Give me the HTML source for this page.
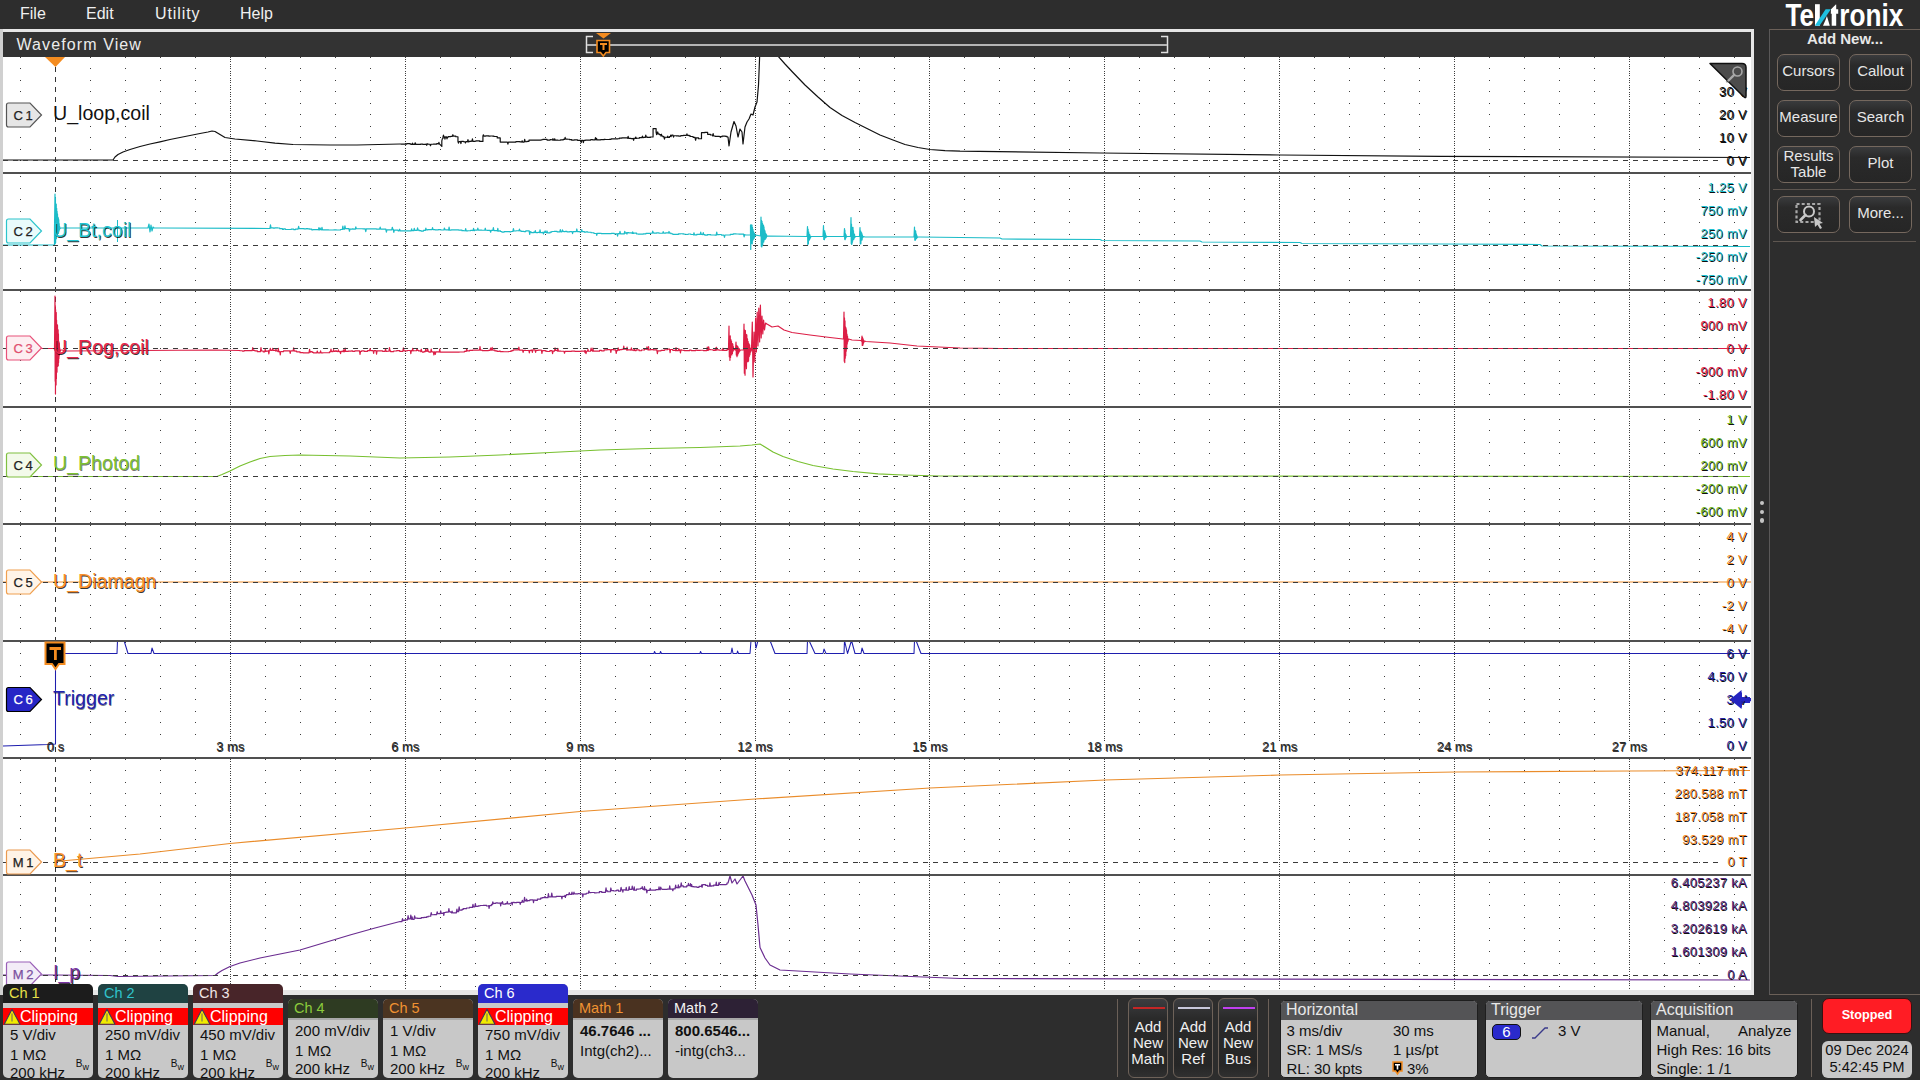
<!DOCTYPE html>
<html><head><meta charset="utf-8">
<style>
*{margin:0;padding:0;box-sizing:border-box}
html,body{width:1920px;height:1080px;overflow:hidden;background:#2d2d2d;font-family:"Liberation Sans",sans-serif}
.abs{position:absolute}
#menu{left:0;top:0;width:1920px;height:29px;background:#2d2d2d}
#menu span{position:absolute;top:5px;font-size:16px;color:#f0f0f0}
#frame{left:0;top:29px;width:1754px;height:966px;background:#e6e6e6}
#title{left:3px;top:32px;width:1748px;height:25px;background:#333}
#title .t{position:absolute;left:13.5px;top:4px;font-size:16px;color:#ececec;letter-spacing:1.1px}
svg.plot{position:absolute;left:0;top:0}
.badge{position:absolute;width:37px;height:25px}
.lbl{position:absolute;font-size:19.6px;line-height:22px;white-space:nowrap}
.ax{position:absolute;right:173px;font-size:13px;line-height:14px;white-space:nowrap;text-align:right;letter-spacing:0.3px;text-shadow:0.8px 0.9px 0.4px rgba(0,0,0,.95)}
.tx{position:absolute;font-size:13px;line-height:14px;white-space:nowrap;color:#2a2a2a;text-shadow:0.6px 0.7px 0.4px rgba(0,0,0,.8)}
/* sidebar */
#side{left:1769px;top:29px;width:151px;height:966px;border-left:1px solid #5a5858;border-top:1px solid #6b6058;border-bottom:1px solid #6b6058}
.sbtn{position:absolute;width:63px;height:37px;border:1px solid #75685e;border-radius:7px;background:linear-gradient(#3a3b3d,#2a2a2a 30%,#262626);color:#e6e6e6;font-size:15px;text-align:center;line-height:33px}
/* bottom */
.chb{position:absolute;width:90px;border-radius:5px;overflow:hidden;background:#c8c8c8;font-size:15px;color:#111}
.chb .h{height:19px;padding-left:6px;line-height:19px;font-size:14.5px}
.chb .l{position:absolute;left:7px;white-space:nowrap}
.panel{position:absolute;top:1000px;height:78px;background:#c8c8c8;border-radius:5px;overflow:hidden;border:1px solid #1e1e1e;font-size:15px;color:#111}
.panel .h{height:19px;background:#545456;color:#e8e8e8;padding-left:5px;line-height:18px;font-size:16px}
.panel .l{position:absolute;white-space:nowrap}
.anb{position:absolute;top:998px;width:40px;height:80px;border:1px solid #6e6259;border-radius:6px;background:linear-gradient(#3c3d40,#2a2a2a 25%,#262626 85%,#303030);color:#f0f0f0;font-size:15px;text-align:center;line-height:16px}
.anb i{position:absolute;left:4px;top:8px;width:32px;height:2px}
.anb div{position:absolute;left:0;width:100%;top:20px}
</style></head><body>
<div id="menu" class="abs">
<span style="left:20px">File</span><span style="left:86px">Edit</span><span style="left:155px;letter-spacing:0.9px">Utility</span><span style="left:240px">Help</span>
</div>
<svg class="abs" style="left:1780px;top:0" width="130" height="30" viewBox="1780 0 130 30"><text x="1785.5" y="25.8" font-family="Liberation Sans" font-weight="bold" font-size="31" fill="#fff" textLength="28.5" lengthAdjust="spacingAndGlyphs">Te</text><rect x="1815" y="4.2" width="4.8" height="21.6" fill="#fff"/><path d="M1823 25.8 L1825.6 19.8 L1826.9 16 L1829.8 25.8 Z" fill="#fff"/><path d="M1814.8 25.8 L1819.5 25.8 L1830.9 9.2 L1825.6 9.2 Z" fill="#1ec0e0"/><path d="M1831 9.2 L1835.8 4.4 L1836.2 4.4 L1836.2 9.2 L1838.2 9.2 L1838.2 13.7 L1836.2 13.7 L1836.2 25.8 L1831.7 25.8 L1831.7 13.7 L1830.8 13.7 Z" fill="#fff"/><text x="1839.3" y="25.8" font-family="Liberation Sans" font-weight="bold" font-size="31" fill="#fff" textLength="64" lengthAdjust="spacingAndGlyphs">ronix</text></svg>
<div id="frame" class="abs"></div>
<div id="title" class="abs"><span class="t">Waveform View</span></div>
<svg class="plot" width="1920" height="1080" viewBox="0 0 1920 1080">
<defs><clipPath id="pc"><rect x="3" y="57" width="1748" height="933"/></clipPath></defs>
<rect x="3" y="57" width="1748" height="933" fill="#fff"/>
<g clip-path="url(#pc)">
<path d="M20 57h1v1h-1zM20 68h1v1h-1zM20 80h1v1h-1zM20 91h1v1h-1zM20 103h1v1h-1zM20 114h1v1h-1zM20 126h1v1h-1zM20 137h1v1h-1zM20 149h1v1h-1zM20 160h1v1h-1zM20 176h1v1h-1zM20 188h1v1h-1zM20 199h1v1h-1zM20 211h1v1h-1zM20 222h1v1h-1zM20 234h1v1h-1zM20 245h1v1h-1zM20 257h1v1h-1zM20 268h1v1h-1zM20 280h1v1h-1zM20 291h1v1h-1zM20 302h1v1h-1zM20 314h1v1h-1zM20 325h1v1h-1zM20 337h1v1h-1zM20 348h1v1h-1zM20 360h1v1h-1zM20 371h1v1h-1zM20 383h1v1h-1zM20 394h1v1h-1zM20 407h1v1h-1zM20 419h1v1h-1zM20 430h1v1h-1zM20 442h1v1h-1zM20 453h1v1h-1zM20 465h1v1h-1zM20 476h1v1h-1zM20 488h1v1h-1zM20 499h1v1h-1zM20 511h1v1h-1zM20 522h1v1h-1zM20 525h1v1h-1zM20 536h1v1h-1zM20 548h1v1h-1zM20 559h1v1h-1zM20 571h1v1h-1zM20 582h1v1h-1zM20 594h1v1h-1zM20 605h1v1h-1zM20 617h1v1h-1zM20 628h1v1h-1zM20 642h1v1h-1zM20 653h1v1h-1zM20 665h1v1h-1zM20 676h1v1h-1zM20 688h1v1h-1zM20 699h1v1h-1zM20 711h1v1h-1zM20 722h1v1h-1zM20 734h1v1h-1zM20 759h1v1h-1zM20 770h1v1h-1zM20 782h1v1h-1zM20 793h1v1h-1zM20 805h1v1h-1zM20 816h1v1h-1zM20 828h1v1h-1zM20 839h1v1h-1zM20 851h1v1h-1zM20 862h1v1h-1zM20 882h1v1h-1zM20 894h1v1h-1zM20 905h1v1h-1zM20 917h1v1h-1zM20 928h1v1h-1zM20 940h1v1h-1zM20 951h1v1h-1zM20 963h1v1h-1zM20 974h1v1h-1zM20 986h1v1h-1zM90 57h1v1h-1zM90 68h1v1h-1zM90 80h1v1h-1zM90 91h1v1h-1zM90 103h1v1h-1zM90 114h1v1h-1zM90 126h1v1h-1zM90 137h1v1h-1zM90 149h1v1h-1zM90 160h1v1h-1zM90 176h1v1h-1zM90 188h1v1h-1zM90 199h1v1h-1zM90 211h1v1h-1zM90 222h1v1h-1zM90 234h1v1h-1zM90 245h1v1h-1zM90 257h1v1h-1zM90 268h1v1h-1zM90 280h1v1h-1zM90 291h1v1h-1zM90 302h1v1h-1zM90 314h1v1h-1zM90 325h1v1h-1zM90 337h1v1h-1zM90 348h1v1h-1zM90 360h1v1h-1zM90 371h1v1h-1zM90 383h1v1h-1zM90 394h1v1h-1zM90 407h1v1h-1zM90 419h1v1h-1zM90 430h1v1h-1zM90 442h1v1h-1zM90 453h1v1h-1zM90 465h1v1h-1zM90 476h1v1h-1zM90 488h1v1h-1zM90 499h1v1h-1zM90 511h1v1h-1zM90 522h1v1h-1zM90 525h1v1h-1zM90 536h1v1h-1zM90 548h1v1h-1zM90 559h1v1h-1zM90 571h1v1h-1zM90 582h1v1h-1zM90 594h1v1h-1zM90 605h1v1h-1zM90 617h1v1h-1zM90 628h1v1h-1zM90 642h1v1h-1zM90 653h1v1h-1zM90 665h1v1h-1zM90 676h1v1h-1zM90 688h1v1h-1zM90 699h1v1h-1zM90 711h1v1h-1zM90 722h1v1h-1zM90 734h1v1h-1zM90 759h1v1h-1zM90 770h1v1h-1zM90 782h1v1h-1zM90 793h1v1h-1zM90 805h1v1h-1zM90 816h1v1h-1zM90 828h1v1h-1zM90 839h1v1h-1zM90 851h1v1h-1zM90 862h1v1h-1zM90 882h1v1h-1zM90 894h1v1h-1zM90 905h1v1h-1zM90 917h1v1h-1zM90 928h1v1h-1zM90 940h1v1h-1zM90 951h1v1h-1zM90 963h1v1h-1zM90 974h1v1h-1zM90 986h1v1h-1zM125 57h1v1h-1zM125 68h1v1h-1zM125 80h1v1h-1zM125 91h1v1h-1zM125 103h1v1h-1zM125 114h1v1h-1zM125 126h1v1h-1zM125 137h1v1h-1zM125 149h1v1h-1zM125 160h1v1h-1zM125 176h1v1h-1zM125 188h1v1h-1zM125 199h1v1h-1zM125 211h1v1h-1zM125 222h1v1h-1zM125 234h1v1h-1zM125 245h1v1h-1zM125 257h1v1h-1zM125 268h1v1h-1zM125 280h1v1h-1zM125 291h1v1h-1zM125 302h1v1h-1zM125 314h1v1h-1zM125 325h1v1h-1zM125 337h1v1h-1zM125 348h1v1h-1zM125 360h1v1h-1zM125 371h1v1h-1zM125 383h1v1h-1zM125 394h1v1h-1zM125 407h1v1h-1zM125 419h1v1h-1zM125 430h1v1h-1zM125 442h1v1h-1zM125 453h1v1h-1zM125 465h1v1h-1zM125 476h1v1h-1zM125 488h1v1h-1zM125 499h1v1h-1zM125 511h1v1h-1zM125 522h1v1h-1zM125 525h1v1h-1zM125 536h1v1h-1zM125 548h1v1h-1zM125 559h1v1h-1zM125 571h1v1h-1zM125 582h1v1h-1zM125 594h1v1h-1zM125 605h1v1h-1zM125 617h1v1h-1zM125 628h1v1h-1zM125 642h1v1h-1zM125 653h1v1h-1zM125 665h1v1h-1zM125 676h1v1h-1zM125 688h1v1h-1zM125 699h1v1h-1zM125 711h1v1h-1zM125 722h1v1h-1zM125 734h1v1h-1zM125 759h1v1h-1zM125 770h1v1h-1zM125 782h1v1h-1zM125 793h1v1h-1zM125 805h1v1h-1zM125 816h1v1h-1zM125 828h1v1h-1zM125 839h1v1h-1zM125 851h1v1h-1zM125 862h1v1h-1zM125 882h1v1h-1zM125 894h1v1h-1zM125 905h1v1h-1zM125 917h1v1h-1zM125 928h1v1h-1zM125 940h1v1h-1zM125 951h1v1h-1zM125 963h1v1h-1zM125 974h1v1h-1zM125 986h1v1h-1zM160 57h1v1h-1zM160 68h1v1h-1zM160 80h1v1h-1zM160 91h1v1h-1zM160 103h1v1h-1zM160 114h1v1h-1zM160 126h1v1h-1zM160 137h1v1h-1zM160 149h1v1h-1zM160 160h1v1h-1zM160 176h1v1h-1zM160 188h1v1h-1zM160 199h1v1h-1zM160 211h1v1h-1zM160 222h1v1h-1zM160 234h1v1h-1zM160 245h1v1h-1zM160 257h1v1h-1zM160 268h1v1h-1zM160 280h1v1h-1zM160 291h1v1h-1zM160 302h1v1h-1zM160 314h1v1h-1zM160 325h1v1h-1zM160 337h1v1h-1zM160 348h1v1h-1zM160 360h1v1h-1zM160 371h1v1h-1zM160 383h1v1h-1zM160 394h1v1h-1zM160 407h1v1h-1zM160 419h1v1h-1zM160 430h1v1h-1zM160 442h1v1h-1zM160 453h1v1h-1zM160 465h1v1h-1zM160 476h1v1h-1zM160 488h1v1h-1zM160 499h1v1h-1zM160 511h1v1h-1zM160 522h1v1h-1zM160 525h1v1h-1zM160 536h1v1h-1zM160 548h1v1h-1zM160 559h1v1h-1zM160 571h1v1h-1zM160 582h1v1h-1zM160 594h1v1h-1zM160 605h1v1h-1zM160 617h1v1h-1zM160 628h1v1h-1zM160 642h1v1h-1zM160 653h1v1h-1zM160 665h1v1h-1zM160 676h1v1h-1zM160 688h1v1h-1zM160 699h1v1h-1zM160 711h1v1h-1zM160 722h1v1h-1zM160 734h1v1h-1zM160 759h1v1h-1zM160 770h1v1h-1zM160 782h1v1h-1zM160 793h1v1h-1zM160 805h1v1h-1zM160 816h1v1h-1zM160 828h1v1h-1zM160 839h1v1h-1zM160 851h1v1h-1zM160 862h1v1h-1zM160 882h1v1h-1zM160 894h1v1h-1zM160 905h1v1h-1zM160 917h1v1h-1zM160 928h1v1h-1zM160 940h1v1h-1zM160 951h1v1h-1zM160 963h1v1h-1zM160 974h1v1h-1zM160 986h1v1h-1zM195 57h1v1h-1zM195 68h1v1h-1zM195 80h1v1h-1zM195 91h1v1h-1zM195 103h1v1h-1zM195 114h1v1h-1zM195 126h1v1h-1zM195 137h1v1h-1zM195 149h1v1h-1zM195 160h1v1h-1zM195 176h1v1h-1zM195 188h1v1h-1zM195 199h1v1h-1zM195 211h1v1h-1zM195 222h1v1h-1zM195 234h1v1h-1zM195 245h1v1h-1zM195 257h1v1h-1zM195 268h1v1h-1zM195 280h1v1h-1zM195 291h1v1h-1zM195 302h1v1h-1zM195 314h1v1h-1zM195 325h1v1h-1zM195 337h1v1h-1zM195 348h1v1h-1zM195 360h1v1h-1zM195 371h1v1h-1zM195 383h1v1h-1zM195 394h1v1h-1zM195 407h1v1h-1zM195 419h1v1h-1zM195 430h1v1h-1zM195 442h1v1h-1zM195 453h1v1h-1zM195 465h1v1h-1zM195 476h1v1h-1zM195 488h1v1h-1zM195 499h1v1h-1zM195 511h1v1h-1zM195 522h1v1h-1zM195 525h1v1h-1zM195 536h1v1h-1zM195 548h1v1h-1zM195 559h1v1h-1zM195 571h1v1h-1zM195 582h1v1h-1zM195 594h1v1h-1zM195 605h1v1h-1zM195 617h1v1h-1zM195 628h1v1h-1zM195 642h1v1h-1zM195 653h1v1h-1zM195 665h1v1h-1zM195 676h1v1h-1zM195 688h1v1h-1zM195 699h1v1h-1zM195 711h1v1h-1zM195 722h1v1h-1zM195 734h1v1h-1zM195 759h1v1h-1zM195 770h1v1h-1zM195 782h1v1h-1zM195 793h1v1h-1zM195 805h1v1h-1zM195 816h1v1h-1zM195 828h1v1h-1zM195 839h1v1h-1zM195 851h1v1h-1zM195 862h1v1h-1zM195 882h1v1h-1zM195 894h1v1h-1zM195 905h1v1h-1zM195 917h1v1h-1zM195 928h1v1h-1zM195 940h1v1h-1zM195 951h1v1h-1zM195 963h1v1h-1zM195 974h1v1h-1zM195 986h1v1h-1zM265 57h1v1h-1zM265 68h1v1h-1zM265 80h1v1h-1zM265 91h1v1h-1zM265 103h1v1h-1zM265 114h1v1h-1zM265 126h1v1h-1zM265 137h1v1h-1zM265 149h1v1h-1zM265 160h1v1h-1zM265 176h1v1h-1zM265 188h1v1h-1zM265 199h1v1h-1zM265 211h1v1h-1zM265 222h1v1h-1zM265 234h1v1h-1zM265 245h1v1h-1zM265 257h1v1h-1zM265 268h1v1h-1zM265 280h1v1h-1zM265 291h1v1h-1zM265 302h1v1h-1zM265 314h1v1h-1zM265 325h1v1h-1zM265 337h1v1h-1zM265 348h1v1h-1zM265 360h1v1h-1zM265 371h1v1h-1zM265 383h1v1h-1zM265 394h1v1h-1zM265 407h1v1h-1zM265 419h1v1h-1zM265 430h1v1h-1zM265 442h1v1h-1zM265 453h1v1h-1zM265 465h1v1h-1zM265 476h1v1h-1zM265 488h1v1h-1zM265 499h1v1h-1zM265 511h1v1h-1zM265 522h1v1h-1zM265 525h1v1h-1zM265 536h1v1h-1zM265 548h1v1h-1zM265 559h1v1h-1zM265 571h1v1h-1zM265 582h1v1h-1zM265 594h1v1h-1zM265 605h1v1h-1zM265 617h1v1h-1zM265 628h1v1h-1zM265 642h1v1h-1zM265 653h1v1h-1zM265 665h1v1h-1zM265 676h1v1h-1zM265 688h1v1h-1zM265 699h1v1h-1zM265 711h1v1h-1zM265 722h1v1h-1zM265 734h1v1h-1zM265 759h1v1h-1zM265 770h1v1h-1zM265 782h1v1h-1zM265 793h1v1h-1zM265 805h1v1h-1zM265 816h1v1h-1zM265 828h1v1h-1zM265 839h1v1h-1zM265 851h1v1h-1zM265 862h1v1h-1zM265 882h1v1h-1zM265 894h1v1h-1zM265 905h1v1h-1zM265 917h1v1h-1zM265 928h1v1h-1zM265 940h1v1h-1zM265 951h1v1h-1zM265 963h1v1h-1zM265 974h1v1h-1zM265 986h1v1h-1zM300 57h1v1h-1zM300 68h1v1h-1zM300 80h1v1h-1zM300 91h1v1h-1zM300 103h1v1h-1zM300 114h1v1h-1zM300 126h1v1h-1zM300 137h1v1h-1zM300 149h1v1h-1zM300 160h1v1h-1zM300 176h1v1h-1zM300 188h1v1h-1zM300 199h1v1h-1zM300 211h1v1h-1zM300 222h1v1h-1zM300 234h1v1h-1zM300 245h1v1h-1zM300 257h1v1h-1zM300 268h1v1h-1zM300 280h1v1h-1zM300 291h1v1h-1zM300 302h1v1h-1zM300 314h1v1h-1zM300 325h1v1h-1zM300 337h1v1h-1zM300 348h1v1h-1zM300 360h1v1h-1zM300 371h1v1h-1zM300 383h1v1h-1zM300 394h1v1h-1zM300 407h1v1h-1zM300 419h1v1h-1zM300 430h1v1h-1zM300 442h1v1h-1zM300 453h1v1h-1zM300 465h1v1h-1zM300 476h1v1h-1zM300 488h1v1h-1zM300 499h1v1h-1zM300 511h1v1h-1zM300 522h1v1h-1zM300 525h1v1h-1zM300 536h1v1h-1zM300 548h1v1h-1zM300 559h1v1h-1zM300 571h1v1h-1zM300 582h1v1h-1zM300 594h1v1h-1zM300 605h1v1h-1zM300 617h1v1h-1zM300 628h1v1h-1zM300 642h1v1h-1zM300 653h1v1h-1zM300 665h1v1h-1zM300 676h1v1h-1zM300 688h1v1h-1zM300 699h1v1h-1zM300 711h1v1h-1zM300 722h1v1h-1zM300 734h1v1h-1zM300 759h1v1h-1zM300 770h1v1h-1zM300 782h1v1h-1zM300 793h1v1h-1zM300 805h1v1h-1zM300 816h1v1h-1zM300 828h1v1h-1zM300 839h1v1h-1zM300 851h1v1h-1zM300 862h1v1h-1zM300 882h1v1h-1zM300 894h1v1h-1zM300 905h1v1h-1zM300 917h1v1h-1zM300 928h1v1h-1zM300 940h1v1h-1zM300 951h1v1h-1zM300 963h1v1h-1zM300 974h1v1h-1zM300 986h1v1h-1zM335 57h1v1h-1zM335 68h1v1h-1zM335 80h1v1h-1zM335 91h1v1h-1zM335 103h1v1h-1zM335 114h1v1h-1zM335 126h1v1h-1zM335 137h1v1h-1zM335 149h1v1h-1zM335 160h1v1h-1zM335 176h1v1h-1zM335 188h1v1h-1zM335 199h1v1h-1zM335 211h1v1h-1zM335 222h1v1h-1zM335 234h1v1h-1zM335 245h1v1h-1zM335 257h1v1h-1zM335 268h1v1h-1zM335 280h1v1h-1zM335 291h1v1h-1zM335 302h1v1h-1zM335 314h1v1h-1zM335 325h1v1h-1zM335 337h1v1h-1zM335 348h1v1h-1zM335 360h1v1h-1zM335 371h1v1h-1zM335 383h1v1h-1zM335 394h1v1h-1zM335 407h1v1h-1zM335 419h1v1h-1zM335 430h1v1h-1zM335 442h1v1h-1zM335 453h1v1h-1zM335 465h1v1h-1zM335 476h1v1h-1zM335 488h1v1h-1zM335 499h1v1h-1zM335 511h1v1h-1zM335 522h1v1h-1zM335 525h1v1h-1zM335 536h1v1h-1zM335 548h1v1h-1zM335 559h1v1h-1zM335 571h1v1h-1zM335 582h1v1h-1zM335 594h1v1h-1zM335 605h1v1h-1zM335 617h1v1h-1zM335 628h1v1h-1zM335 642h1v1h-1zM335 653h1v1h-1zM335 665h1v1h-1zM335 676h1v1h-1zM335 688h1v1h-1zM335 699h1v1h-1zM335 711h1v1h-1zM335 722h1v1h-1zM335 734h1v1h-1zM335 759h1v1h-1zM335 770h1v1h-1zM335 782h1v1h-1zM335 793h1v1h-1zM335 805h1v1h-1zM335 816h1v1h-1zM335 828h1v1h-1zM335 839h1v1h-1zM335 851h1v1h-1zM335 862h1v1h-1zM335 882h1v1h-1zM335 894h1v1h-1zM335 905h1v1h-1zM335 917h1v1h-1zM335 928h1v1h-1zM335 940h1v1h-1zM335 951h1v1h-1zM335 963h1v1h-1zM335 974h1v1h-1zM335 986h1v1h-1zM370 57h1v1h-1zM370 68h1v1h-1zM370 80h1v1h-1zM370 91h1v1h-1zM370 103h1v1h-1zM370 114h1v1h-1zM370 126h1v1h-1zM370 137h1v1h-1zM370 149h1v1h-1zM370 160h1v1h-1zM370 176h1v1h-1zM370 188h1v1h-1zM370 199h1v1h-1zM370 211h1v1h-1zM370 222h1v1h-1zM370 234h1v1h-1zM370 245h1v1h-1zM370 257h1v1h-1zM370 268h1v1h-1zM370 280h1v1h-1zM370 291h1v1h-1zM370 302h1v1h-1zM370 314h1v1h-1zM370 325h1v1h-1zM370 337h1v1h-1zM370 348h1v1h-1zM370 360h1v1h-1zM370 371h1v1h-1zM370 383h1v1h-1zM370 394h1v1h-1zM370 407h1v1h-1zM370 419h1v1h-1zM370 430h1v1h-1zM370 442h1v1h-1zM370 453h1v1h-1zM370 465h1v1h-1zM370 476h1v1h-1zM370 488h1v1h-1zM370 499h1v1h-1zM370 511h1v1h-1zM370 522h1v1h-1zM370 525h1v1h-1zM370 536h1v1h-1zM370 548h1v1h-1zM370 559h1v1h-1zM370 571h1v1h-1zM370 582h1v1h-1zM370 594h1v1h-1zM370 605h1v1h-1zM370 617h1v1h-1zM370 628h1v1h-1zM370 642h1v1h-1zM370 653h1v1h-1zM370 665h1v1h-1zM370 676h1v1h-1zM370 688h1v1h-1zM370 699h1v1h-1zM370 711h1v1h-1zM370 722h1v1h-1zM370 734h1v1h-1zM370 759h1v1h-1zM370 770h1v1h-1zM370 782h1v1h-1zM370 793h1v1h-1zM370 805h1v1h-1zM370 816h1v1h-1zM370 828h1v1h-1zM370 839h1v1h-1zM370 851h1v1h-1zM370 862h1v1h-1zM370 882h1v1h-1zM370 894h1v1h-1zM370 905h1v1h-1zM370 917h1v1h-1zM370 928h1v1h-1zM370 940h1v1h-1zM370 951h1v1h-1zM370 963h1v1h-1zM370 974h1v1h-1zM370 986h1v1h-1zM440 57h1v1h-1zM440 68h1v1h-1zM440 80h1v1h-1zM440 91h1v1h-1zM440 103h1v1h-1zM440 114h1v1h-1zM440 126h1v1h-1zM440 137h1v1h-1zM440 149h1v1h-1zM440 160h1v1h-1zM440 176h1v1h-1zM440 188h1v1h-1zM440 199h1v1h-1zM440 211h1v1h-1zM440 222h1v1h-1zM440 234h1v1h-1zM440 245h1v1h-1zM440 257h1v1h-1zM440 268h1v1h-1zM440 280h1v1h-1zM440 291h1v1h-1zM440 302h1v1h-1zM440 314h1v1h-1zM440 325h1v1h-1zM440 337h1v1h-1zM440 348h1v1h-1zM440 360h1v1h-1zM440 371h1v1h-1zM440 383h1v1h-1zM440 394h1v1h-1zM440 407h1v1h-1zM440 419h1v1h-1zM440 430h1v1h-1zM440 442h1v1h-1zM440 453h1v1h-1zM440 465h1v1h-1zM440 476h1v1h-1zM440 488h1v1h-1zM440 499h1v1h-1zM440 511h1v1h-1zM440 522h1v1h-1zM440 525h1v1h-1zM440 536h1v1h-1zM440 548h1v1h-1zM440 559h1v1h-1zM440 571h1v1h-1zM440 582h1v1h-1zM440 594h1v1h-1zM440 605h1v1h-1zM440 617h1v1h-1zM440 628h1v1h-1zM440 642h1v1h-1zM440 653h1v1h-1zM440 665h1v1h-1zM440 676h1v1h-1zM440 688h1v1h-1zM440 699h1v1h-1zM440 711h1v1h-1zM440 722h1v1h-1zM440 734h1v1h-1zM440 759h1v1h-1zM440 770h1v1h-1zM440 782h1v1h-1zM440 793h1v1h-1zM440 805h1v1h-1zM440 816h1v1h-1zM440 828h1v1h-1zM440 839h1v1h-1zM440 851h1v1h-1zM440 862h1v1h-1zM440 882h1v1h-1zM440 894h1v1h-1zM440 905h1v1h-1zM440 917h1v1h-1zM440 928h1v1h-1zM440 940h1v1h-1zM440 951h1v1h-1zM440 963h1v1h-1zM440 974h1v1h-1zM440 986h1v1h-1zM475 57h1v1h-1zM475 68h1v1h-1zM475 80h1v1h-1zM475 91h1v1h-1zM475 103h1v1h-1zM475 114h1v1h-1zM475 126h1v1h-1zM475 137h1v1h-1zM475 149h1v1h-1zM475 160h1v1h-1zM475 176h1v1h-1zM475 188h1v1h-1zM475 199h1v1h-1zM475 211h1v1h-1zM475 222h1v1h-1zM475 234h1v1h-1zM475 245h1v1h-1zM475 257h1v1h-1zM475 268h1v1h-1zM475 280h1v1h-1zM475 291h1v1h-1zM475 302h1v1h-1zM475 314h1v1h-1zM475 325h1v1h-1zM475 337h1v1h-1zM475 348h1v1h-1zM475 360h1v1h-1zM475 371h1v1h-1zM475 383h1v1h-1zM475 394h1v1h-1zM475 407h1v1h-1zM475 419h1v1h-1zM475 430h1v1h-1zM475 442h1v1h-1zM475 453h1v1h-1zM475 465h1v1h-1zM475 476h1v1h-1zM475 488h1v1h-1zM475 499h1v1h-1zM475 511h1v1h-1zM475 522h1v1h-1zM475 525h1v1h-1zM475 536h1v1h-1zM475 548h1v1h-1zM475 559h1v1h-1zM475 571h1v1h-1zM475 582h1v1h-1zM475 594h1v1h-1zM475 605h1v1h-1zM475 617h1v1h-1zM475 628h1v1h-1zM475 642h1v1h-1zM475 653h1v1h-1zM475 665h1v1h-1zM475 676h1v1h-1zM475 688h1v1h-1zM475 699h1v1h-1zM475 711h1v1h-1zM475 722h1v1h-1zM475 734h1v1h-1zM475 759h1v1h-1zM475 770h1v1h-1zM475 782h1v1h-1zM475 793h1v1h-1zM475 805h1v1h-1zM475 816h1v1h-1zM475 828h1v1h-1zM475 839h1v1h-1zM475 851h1v1h-1zM475 862h1v1h-1zM475 882h1v1h-1zM475 894h1v1h-1zM475 905h1v1h-1zM475 917h1v1h-1zM475 928h1v1h-1zM475 940h1v1h-1zM475 951h1v1h-1zM475 963h1v1h-1zM475 974h1v1h-1zM475 986h1v1h-1zM510 57h1v1h-1zM510 68h1v1h-1zM510 80h1v1h-1zM510 91h1v1h-1zM510 103h1v1h-1zM510 114h1v1h-1zM510 126h1v1h-1zM510 137h1v1h-1zM510 149h1v1h-1zM510 160h1v1h-1zM510 176h1v1h-1zM510 188h1v1h-1zM510 199h1v1h-1zM510 211h1v1h-1zM510 222h1v1h-1zM510 234h1v1h-1zM510 245h1v1h-1zM510 257h1v1h-1zM510 268h1v1h-1zM510 280h1v1h-1zM510 291h1v1h-1zM510 302h1v1h-1zM510 314h1v1h-1zM510 325h1v1h-1zM510 337h1v1h-1zM510 348h1v1h-1zM510 360h1v1h-1zM510 371h1v1h-1zM510 383h1v1h-1zM510 394h1v1h-1zM510 407h1v1h-1zM510 419h1v1h-1zM510 430h1v1h-1zM510 442h1v1h-1zM510 453h1v1h-1zM510 465h1v1h-1zM510 476h1v1h-1zM510 488h1v1h-1zM510 499h1v1h-1zM510 511h1v1h-1zM510 522h1v1h-1zM510 525h1v1h-1zM510 536h1v1h-1zM510 548h1v1h-1zM510 559h1v1h-1zM510 571h1v1h-1zM510 582h1v1h-1zM510 594h1v1h-1zM510 605h1v1h-1zM510 617h1v1h-1zM510 628h1v1h-1zM510 642h1v1h-1zM510 653h1v1h-1zM510 665h1v1h-1zM510 676h1v1h-1zM510 688h1v1h-1zM510 699h1v1h-1zM510 711h1v1h-1zM510 722h1v1h-1zM510 734h1v1h-1zM510 759h1v1h-1zM510 770h1v1h-1zM510 782h1v1h-1zM510 793h1v1h-1zM510 805h1v1h-1zM510 816h1v1h-1zM510 828h1v1h-1zM510 839h1v1h-1zM510 851h1v1h-1zM510 862h1v1h-1zM510 882h1v1h-1zM510 894h1v1h-1zM510 905h1v1h-1zM510 917h1v1h-1zM510 928h1v1h-1zM510 940h1v1h-1zM510 951h1v1h-1zM510 963h1v1h-1zM510 974h1v1h-1zM510 986h1v1h-1zM545 57h1v1h-1zM545 68h1v1h-1zM545 80h1v1h-1zM545 91h1v1h-1zM545 103h1v1h-1zM545 114h1v1h-1zM545 126h1v1h-1zM545 137h1v1h-1zM545 149h1v1h-1zM545 160h1v1h-1zM545 176h1v1h-1zM545 188h1v1h-1zM545 199h1v1h-1zM545 211h1v1h-1zM545 222h1v1h-1zM545 234h1v1h-1zM545 245h1v1h-1zM545 257h1v1h-1zM545 268h1v1h-1zM545 280h1v1h-1zM545 291h1v1h-1zM545 302h1v1h-1zM545 314h1v1h-1zM545 325h1v1h-1zM545 337h1v1h-1zM545 348h1v1h-1zM545 360h1v1h-1zM545 371h1v1h-1zM545 383h1v1h-1zM545 394h1v1h-1zM545 407h1v1h-1zM545 419h1v1h-1zM545 430h1v1h-1zM545 442h1v1h-1zM545 453h1v1h-1zM545 465h1v1h-1zM545 476h1v1h-1zM545 488h1v1h-1zM545 499h1v1h-1zM545 511h1v1h-1zM545 522h1v1h-1zM545 525h1v1h-1zM545 536h1v1h-1zM545 548h1v1h-1zM545 559h1v1h-1zM545 571h1v1h-1zM545 582h1v1h-1zM545 594h1v1h-1zM545 605h1v1h-1zM545 617h1v1h-1zM545 628h1v1h-1zM545 642h1v1h-1zM545 653h1v1h-1zM545 665h1v1h-1zM545 676h1v1h-1zM545 688h1v1h-1zM545 699h1v1h-1zM545 711h1v1h-1zM545 722h1v1h-1zM545 734h1v1h-1zM545 759h1v1h-1zM545 770h1v1h-1zM545 782h1v1h-1zM545 793h1v1h-1zM545 805h1v1h-1zM545 816h1v1h-1zM545 828h1v1h-1zM545 839h1v1h-1zM545 851h1v1h-1zM545 862h1v1h-1zM545 882h1v1h-1zM545 894h1v1h-1zM545 905h1v1h-1zM545 917h1v1h-1zM545 928h1v1h-1zM545 940h1v1h-1zM545 951h1v1h-1zM545 963h1v1h-1zM545 974h1v1h-1zM545 986h1v1h-1zM615 57h1v1h-1zM615 68h1v1h-1zM615 80h1v1h-1zM615 91h1v1h-1zM615 103h1v1h-1zM615 114h1v1h-1zM615 126h1v1h-1zM615 137h1v1h-1zM615 149h1v1h-1zM615 160h1v1h-1zM615 176h1v1h-1zM615 188h1v1h-1zM615 199h1v1h-1zM615 211h1v1h-1zM615 222h1v1h-1zM615 234h1v1h-1zM615 245h1v1h-1zM615 257h1v1h-1zM615 268h1v1h-1zM615 280h1v1h-1zM615 291h1v1h-1zM615 302h1v1h-1zM615 314h1v1h-1zM615 325h1v1h-1zM615 337h1v1h-1zM615 348h1v1h-1zM615 360h1v1h-1zM615 371h1v1h-1zM615 383h1v1h-1zM615 394h1v1h-1zM615 407h1v1h-1zM615 419h1v1h-1zM615 430h1v1h-1zM615 442h1v1h-1zM615 453h1v1h-1zM615 465h1v1h-1zM615 476h1v1h-1zM615 488h1v1h-1zM615 499h1v1h-1zM615 511h1v1h-1zM615 522h1v1h-1zM615 525h1v1h-1zM615 536h1v1h-1zM615 548h1v1h-1zM615 559h1v1h-1zM615 571h1v1h-1zM615 582h1v1h-1zM615 594h1v1h-1zM615 605h1v1h-1zM615 617h1v1h-1zM615 628h1v1h-1zM615 642h1v1h-1zM615 653h1v1h-1zM615 665h1v1h-1zM615 676h1v1h-1zM615 688h1v1h-1zM615 699h1v1h-1zM615 711h1v1h-1zM615 722h1v1h-1zM615 734h1v1h-1zM615 759h1v1h-1zM615 770h1v1h-1zM615 782h1v1h-1zM615 793h1v1h-1zM615 805h1v1h-1zM615 816h1v1h-1zM615 828h1v1h-1zM615 839h1v1h-1zM615 851h1v1h-1zM615 862h1v1h-1zM615 882h1v1h-1zM615 894h1v1h-1zM615 905h1v1h-1zM615 917h1v1h-1zM615 928h1v1h-1zM615 940h1v1h-1zM615 951h1v1h-1zM615 963h1v1h-1zM615 974h1v1h-1zM615 986h1v1h-1zM650 57h1v1h-1zM650 68h1v1h-1zM650 80h1v1h-1zM650 91h1v1h-1zM650 103h1v1h-1zM650 114h1v1h-1zM650 126h1v1h-1zM650 137h1v1h-1zM650 149h1v1h-1zM650 160h1v1h-1zM650 176h1v1h-1zM650 188h1v1h-1zM650 199h1v1h-1zM650 211h1v1h-1zM650 222h1v1h-1zM650 234h1v1h-1zM650 245h1v1h-1zM650 257h1v1h-1zM650 268h1v1h-1zM650 280h1v1h-1zM650 291h1v1h-1zM650 302h1v1h-1zM650 314h1v1h-1zM650 325h1v1h-1zM650 337h1v1h-1zM650 348h1v1h-1zM650 360h1v1h-1zM650 371h1v1h-1zM650 383h1v1h-1zM650 394h1v1h-1zM650 407h1v1h-1zM650 419h1v1h-1zM650 430h1v1h-1zM650 442h1v1h-1zM650 453h1v1h-1zM650 465h1v1h-1zM650 476h1v1h-1zM650 488h1v1h-1zM650 499h1v1h-1zM650 511h1v1h-1zM650 522h1v1h-1zM650 525h1v1h-1zM650 536h1v1h-1zM650 548h1v1h-1zM650 559h1v1h-1zM650 571h1v1h-1zM650 582h1v1h-1zM650 594h1v1h-1zM650 605h1v1h-1zM650 617h1v1h-1zM650 628h1v1h-1zM650 642h1v1h-1zM650 653h1v1h-1zM650 665h1v1h-1zM650 676h1v1h-1zM650 688h1v1h-1zM650 699h1v1h-1zM650 711h1v1h-1zM650 722h1v1h-1zM650 734h1v1h-1zM650 759h1v1h-1zM650 770h1v1h-1zM650 782h1v1h-1zM650 793h1v1h-1zM650 805h1v1h-1zM650 816h1v1h-1zM650 828h1v1h-1zM650 839h1v1h-1zM650 851h1v1h-1zM650 862h1v1h-1zM650 882h1v1h-1zM650 894h1v1h-1zM650 905h1v1h-1zM650 917h1v1h-1zM650 928h1v1h-1zM650 940h1v1h-1zM650 951h1v1h-1zM650 963h1v1h-1zM650 974h1v1h-1zM650 986h1v1h-1zM685 57h1v1h-1zM685 68h1v1h-1zM685 80h1v1h-1zM685 91h1v1h-1zM685 103h1v1h-1zM685 114h1v1h-1zM685 126h1v1h-1zM685 137h1v1h-1zM685 149h1v1h-1zM685 160h1v1h-1zM685 176h1v1h-1zM685 188h1v1h-1zM685 199h1v1h-1zM685 211h1v1h-1zM685 222h1v1h-1zM685 234h1v1h-1zM685 245h1v1h-1zM685 257h1v1h-1zM685 268h1v1h-1zM685 280h1v1h-1zM685 291h1v1h-1zM685 302h1v1h-1zM685 314h1v1h-1zM685 325h1v1h-1zM685 337h1v1h-1zM685 348h1v1h-1zM685 360h1v1h-1zM685 371h1v1h-1zM685 383h1v1h-1zM685 394h1v1h-1zM685 407h1v1h-1zM685 419h1v1h-1zM685 430h1v1h-1zM685 442h1v1h-1zM685 453h1v1h-1zM685 465h1v1h-1zM685 476h1v1h-1zM685 488h1v1h-1zM685 499h1v1h-1zM685 511h1v1h-1zM685 522h1v1h-1zM685 525h1v1h-1zM685 536h1v1h-1zM685 548h1v1h-1zM685 559h1v1h-1zM685 571h1v1h-1zM685 582h1v1h-1zM685 594h1v1h-1zM685 605h1v1h-1zM685 617h1v1h-1zM685 628h1v1h-1zM685 642h1v1h-1zM685 653h1v1h-1zM685 665h1v1h-1zM685 676h1v1h-1zM685 688h1v1h-1zM685 699h1v1h-1zM685 711h1v1h-1zM685 722h1v1h-1zM685 734h1v1h-1zM685 759h1v1h-1zM685 770h1v1h-1zM685 782h1v1h-1zM685 793h1v1h-1zM685 805h1v1h-1zM685 816h1v1h-1zM685 828h1v1h-1zM685 839h1v1h-1zM685 851h1v1h-1zM685 862h1v1h-1zM685 882h1v1h-1zM685 894h1v1h-1zM685 905h1v1h-1zM685 917h1v1h-1zM685 928h1v1h-1zM685 940h1v1h-1zM685 951h1v1h-1zM685 963h1v1h-1zM685 974h1v1h-1zM685 986h1v1h-1zM720 57h1v1h-1zM720 68h1v1h-1zM720 80h1v1h-1zM720 91h1v1h-1zM720 103h1v1h-1zM720 114h1v1h-1zM720 126h1v1h-1zM720 137h1v1h-1zM720 149h1v1h-1zM720 160h1v1h-1zM720 176h1v1h-1zM720 188h1v1h-1zM720 199h1v1h-1zM720 211h1v1h-1zM720 222h1v1h-1zM720 234h1v1h-1zM720 245h1v1h-1zM720 257h1v1h-1zM720 268h1v1h-1zM720 280h1v1h-1zM720 291h1v1h-1zM720 302h1v1h-1zM720 314h1v1h-1zM720 325h1v1h-1zM720 337h1v1h-1zM720 348h1v1h-1zM720 360h1v1h-1zM720 371h1v1h-1zM720 383h1v1h-1zM720 394h1v1h-1zM720 407h1v1h-1zM720 419h1v1h-1zM720 430h1v1h-1zM720 442h1v1h-1zM720 453h1v1h-1zM720 465h1v1h-1zM720 476h1v1h-1zM720 488h1v1h-1zM720 499h1v1h-1zM720 511h1v1h-1zM720 522h1v1h-1zM720 525h1v1h-1zM720 536h1v1h-1zM720 548h1v1h-1zM720 559h1v1h-1zM720 571h1v1h-1zM720 582h1v1h-1zM720 594h1v1h-1zM720 605h1v1h-1zM720 617h1v1h-1zM720 628h1v1h-1zM720 642h1v1h-1zM720 653h1v1h-1zM720 665h1v1h-1zM720 676h1v1h-1zM720 688h1v1h-1zM720 699h1v1h-1zM720 711h1v1h-1zM720 722h1v1h-1zM720 734h1v1h-1zM720 759h1v1h-1zM720 770h1v1h-1zM720 782h1v1h-1zM720 793h1v1h-1zM720 805h1v1h-1zM720 816h1v1h-1zM720 828h1v1h-1zM720 839h1v1h-1zM720 851h1v1h-1zM720 862h1v1h-1zM720 882h1v1h-1zM720 894h1v1h-1zM720 905h1v1h-1zM720 917h1v1h-1zM720 928h1v1h-1zM720 940h1v1h-1zM720 951h1v1h-1zM720 963h1v1h-1zM720 974h1v1h-1zM720 986h1v1h-1zM789 57h1v1h-1zM789 68h1v1h-1zM789 80h1v1h-1zM789 91h1v1h-1zM789 103h1v1h-1zM789 114h1v1h-1zM789 126h1v1h-1zM789 137h1v1h-1zM789 149h1v1h-1zM789 160h1v1h-1zM789 176h1v1h-1zM789 188h1v1h-1zM789 199h1v1h-1zM789 211h1v1h-1zM789 222h1v1h-1zM789 234h1v1h-1zM789 245h1v1h-1zM789 257h1v1h-1zM789 268h1v1h-1zM789 280h1v1h-1zM789 291h1v1h-1zM789 302h1v1h-1zM789 314h1v1h-1zM789 325h1v1h-1zM789 337h1v1h-1zM789 348h1v1h-1zM789 360h1v1h-1zM789 371h1v1h-1zM789 383h1v1h-1zM789 394h1v1h-1zM789 407h1v1h-1zM789 419h1v1h-1zM789 430h1v1h-1zM789 442h1v1h-1zM789 453h1v1h-1zM789 465h1v1h-1zM789 476h1v1h-1zM789 488h1v1h-1zM789 499h1v1h-1zM789 511h1v1h-1zM789 522h1v1h-1zM789 525h1v1h-1zM789 536h1v1h-1zM789 548h1v1h-1zM789 559h1v1h-1zM789 571h1v1h-1zM789 582h1v1h-1zM789 594h1v1h-1zM789 605h1v1h-1zM789 617h1v1h-1zM789 628h1v1h-1zM789 642h1v1h-1zM789 653h1v1h-1zM789 665h1v1h-1zM789 676h1v1h-1zM789 688h1v1h-1zM789 699h1v1h-1zM789 711h1v1h-1zM789 722h1v1h-1zM789 734h1v1h-1zM789 759h1v1h-1zM789 770h1v1h-1zM789 782h1v1h-1zM789 793h1v1h-1zM789 805h1v1h-1zM789 816h1v1h-1zM789 828h1v1h-1zM789 839h1v1h-1zM789 851h1v1h-1zM789 862h1v1h-1zM789 882h1v1h-1zM789 894h1v1h-1zM789 905h1v1h-1zM789 917h1v1h-1zM789 928h1v1h-1zM789 940h1v1h-1zM789 951h1v1h-1zM789 963h1v1h-1zM789 974h1v1h-1zM789 986h1v1h-1zM824 57h1v1h-1zM824 68h1v1h-1zM824 80h1v1h-1zM824 91h1v1h-1zM824 103h1v1h-1zM824 114h1v1h-1zM824 126h1v1h-1zM824 137h1v1h-1zM824 149h1v1h-1zM824 160h1v1h-1zM824 176h1v1h-1zM824 188h1v1h-1zM824 199h1v1h-1zM824 211h1v1h-1zM824 222h1v1h-1zM824 234h1v1h-1zM824 245h1v1h-1zM824 257h1v1h-1zM824 268h1v1h-1zM824 280h1v1h-1zM824 291h1v1h-1zM824 302h1v1h-1zM824 314h1v1h-1zM824 325h1v1h-1zM824 337h1v1h-1zM824 348h1v1h-1zM824 360h1v1h-1zM824 371h1v1h-1zM824 383h1v1h-1zM824 394h1v1h-1zM824 407h1v1h-1zM824 419h1v1h-1zM824 430h1v1h-1zM824 442h1v1h-1zM824 453h1v1h-1zM824 465h1v1h-1zM824 476h1v1h-1zM824 488h1v1h-1zM824 499h1v1h-1zM824 511h1v1h-1zM824 522h1v1h-1zM824 525h1v1h-1zM824 536h1v1h-1zM824 548h1v1h-1zM824 559h1v1h-1zM824 571h1v1h-1zM824 582h1v1h-1zM824 594h1v1h-1zM824 605h1v1h-1zM824 617h1v1h-1zM824 628h1v1h-1zM824 642h1v1h-1zM824 653h1v1h-1zM824 665h1v1h-1zM824 676h1v1h-1zM824 688h1v1h-1zM824 699h1v1h-1zM824 711h1v1h-1zM824 722h1v1h-1zM824 734h1v1h-1zM824 759h1v1h-1zM824 770h1v1h-1zM824 782h1v1h-1zM824 793h1v1h-1zM824 805h1v1h-1zM824 816h1v1h-1zM824 828h1v1h-1zM824 839h1v1h-1zM824 851h1v1h-1zM824 862h1v1h-1zM824 882h1v1h-1zM824 894h1v1h-1zM824 905h1v1h-1zM824 917h1v1h-1zM824 928h1v1h-1zM824 940h1v1h-1zM824 951h1v1h-1zM824 963h1v1h-1zM824 974h1v1h-1zM824 986h1v1h-1zM859 57h1v1h-1zM859 68h1v1h-1zM859 80h1v1h-1zM859 91h1v1h-1zM859 103h1v1h-1zM859 114h1v1h-1zM859 126h1v1h-1zM859 137h1v1h-1zM859 149h1v1h-1zM859 160h1v1h-1zM859 176h1v1h-1zM859 188h1v1h-1zM859 199h1v1h-1zM859 211h1v1h-1zM859 222h1v1h-1zM859 234h1v1h-1zM859 245h1v1h-1zM859 257h1v1h-1zM859 268h1v1h-1zM859 280h1v1h-1zM859 291h1v1h-1zM859 302h1v1h-1zM859 314h1v1h-1zM859 325h1v1h-1zM859 337h1v1h-1zM859 348h1v1h-1zM859 360h1v1h-1zM859 371h1v1h-1zM859 383h1v1h-1zM859 394h1v1h-1zM859 407h1v1h-1zM859 419h1v1h-1zM859 430h1v1h-1zM859 442h1v1h-1zM859 453h1v1h-1zM859 465h1v1h-1zM859 476h1v1h-1zM859 488h1v1h-1zM859 499h1v1h-1zM859 511h1v1h-1zM859 522h1v1h-1zM859 525h1v1h-1zM859 536h1v1h-1zM859 548h1v1h-1zM859 559h1v1h-1zM859 571h1v1h-1zM859 582h1v1h-1zM859 594h1v1h-1zM859 605h1v1h-1zM859 617h1v1h-1zM859 628h1v1h-1zM859 642h1v1h-1zM859 653h1v1h-1zM859 665h1v1h-1zM859 676h1v1h-1zM859 688h1v1h-1zM859 699h1v1h-1zM859 711h1v1h-1zM859 722h1v1h-1zM859 734h1v1h-1zM859 759h1v1h-1zM859 770h1v1h-1zM859 782h1v1h-1zM859 793h1v1h-1zM859 805h1v1h-1zM859 816h1v1h-1zM859 828h1v1h-1zM859 839h1v1h-1zM859 851h1v1h-1zM859 862h1v1h-1zM859 882h1v1h-1zM859 894h1v1h-1zM859 905h1v1h-1zM859 917h1v1h-1zM859 928h1v1h-1zM859 940h1v1h-1zM859 951h1v1h-1zM859 963h1v1h-1zM859 974h1v1h-1zM859 986h1v1h-1zM894 57h1v1h-1zM894 68h1v1h-1zM894 80h1v1h-1zM894 91h1v1h-1zM894 103h1v1h-1zM894 114h1v1h-1zM894 126h1v1h-1zM894 137h1v1h-1zM894 149h1v1h-1zM894 160h1v1h-1zM894 176h1v1h-1zM894 188h1v1h-1zM894 199h1v1h-1zM894 211h1v1h-1zM894 222h1v1h-1zM894 234h1v1h-1zM894 245h1v1h-1zM894 257h1v1h-1zM894 268h1v1h-1zM894 280h1v1h-1zM894 291h1v1h-1zM894 302h1v1h-1zM894 314h1v1h-1zM894 325h1v1h-1zM894 337h1v1h-1zM894 348h1v1h-1zM894 360h1v1h-1zM894 371h1v1h-1zM894 383h1v1h-1zM894 394h1v1h-1zM894 407h1v1h-1zM894 419h1v1h-1zM894 430h1v1h-1zM894 442h1v1h-1zM894 453h1v1h-1zM894 465h1v1h-1zM894 476h1v1h-1zM894 488h1v1h-1zM894 499h1v1h-1zM894 511h1v1h-1zM894 522h1v1h-1zM894 525h1v1h-1zM894 536h1v1h-1zM894 548h1v1h-1zM894 559h1v1h-1zM894 571h1v1h-1zM894 582h1v1h-1zM894 594h1v1h-1zM894 605h1v1h-1zM894 617h1v1h-1zM894 628h1v1h-1zM894 642h1v1h-1zM894 653h1v1h-1zM894 665h1v1h-1zM894 676h1v1h-1zM894 688h1v1h-1zM894 699h1v1h-1zM894 711h1v1h-1zM894 722h1v1h-1zM894 734h1v1h-1zM894 759h1v1h-1zM894 770h1v1h-1zM894 782h1v1h-1zM894 793h1v1h-1zM894 805h1v1h-1zM894 816h1v1h-1zM894 828h1v1h-1zM894 839h1v1h-1zM894 851h1v1h-1zM894 862h1v1h-1zM894 882h1v1h-1zM894 894h1v1h-1zM894 905h1v1h-1zM894 917h1v1h-1zM894 928h1v1h-1zM894 940h1v1h-1zM894 951h1v1h-1zM894 963h1v1h-1zM894 974h1v1h-1zM894 986h1v1h-1zM964 57h1v1h-1zM964 68h1v1h-1zM964 80h1v1h-1zM964 91h1v1h-1zM964 103h1v1h-1zM964 114h1v1h-1zM964 126h1v1h-1zM964 137h1v1h-1zM964 149h1v1h-1zM964 160h1v1h-1zM964 176h1v1h-1zM964 188h1v1h-1zM964 199h1v1h-1zM964 211h1v1h-1zM964 222h1v1h-1zM964 234h1v1h-1zM964 245h1v1h-1zM964 257h1v1h-1zM964 268h1v1h-1zM964 280h1v1h-1zM964 291h1v1h-1zM964 302h1v1h-1zM964 314h1v1h-1zM964 325h1v1h-1zM964 337h1v1h-1zM964 348h1v1h-1zM964 360h1v1h-1zM964 371h1v1h-1zM964 383h1v1h-1zM964 394h1v1h-1zM964 407h1v1h-1zM964 419h1v1h-1zM964 430h1v1h-1zM964 442h1v1h-1zM964 453h1v1h-1zM964 465h1v1h-1zM964 476h1v1h-1zM964 488h1v1h-1zM964 499h1v1h-1zM964 511h1v1h-1zM964 522h1v1h-1zM964 525h1v1h-1zM964 536h1v1h-1zM964 548h1v1h-1zM964 559h1v1h-1zM964 571h1v1h-1zM964 582h1v1h-1zM964 594h1v1h-1zM964 605h1v1h-1zM964 617h1v1h-1zM964 628h1v1h-1zM964 642h1v1h-1zM964 653h1v1h-1zM964 665h1v1h-1zM964 676h1v1h-1zM964 688h1v1h-1zM964 699h1v1h-1zM964 711h1v1h-1zM964 722h1v1h-1zM964 734h1v1h-1zM964 759h1v1h-1zM964 770h1v1h-1zM964 782h1v1h-1zM964 793h1v1h-1zM964 805h1v1h-1zM964 816h1v1h-1zM964 828h1v1h-1zM964 839h1v1h-1zM964 851h1v1h-1zM964 862h1v1h-1zM964 882h1v1h-1zM964 894h1v1h-1zM964 905h1v1h-1zM964 917h1v1h-1zM964 928h1v1h-1zM964 940h1v1h-1zM964 951h1v1h-1zM964 963h1v1h-1zM964 974h1v1h-1zM964 986h1v1h-1zM999 57h1v1h-1zM999 68h1v1h-1zM999 80h1v1h-1zM999 91h1v1h-1zM999 103h1v1h-1zM999 114h1v1h-1zM999 126h1v1h-1zM999 137h1v1h-1zM999 149h1v1h-1zM999 160h1v1h-1zM999 176h1v1h-1zM999 188h1v1h-1zM999 199h1v1h-1zM999 211h1v1h-1zM999 222h1v1h-1zM999 234h1v1h-1zM999 245h1v1h-1zM999 257h1v1h-1zM999 268h1v1h-1zM999 280h1v1h-1zM999 291h1v1h-1zM999 302h1v1h-1zM999 314h1v1h-1zM999 325h1v1h-1zM999 337h1v1h-1zM999 348h1v1h-1zM999 360h1v1h-1zM999 371h1v1h-1zM999 383h1v1h-1zM999 394h1v1h-1zM999 407h1v1h-1zM999 419h1v1h-1zM999 430h1v1h-1zM999 442h1v1h-1zM999 453h1v1h-1zM999 465h1v1h-1zM999 476h1v1h-1zM999 488h1v1h-1zM999 499h1v1h-1zM999 511h1v1h-1zM999 522h1v1h-1zM999 525h1v1h-1zM999 536h1v1h-1zM999 548h1v1h-1zM999 559h1v1h-1zM999 571h1v1h-1zM999 582h1v1h-1zM999 594h1v1h-1zM999 605h1v1h-1zM999 617h1v1h-1zM999 628h1v1h-1zM999 642h1v1h-1zM999 653h1v1h-1zM999 665h1v1h-1zM999 676h1v1h-1zM999 688h1v1h-1zM999 699h1v1h-1zM999 711h1v1h-1zM999 722h1v1h-1zM999 734h1v1h-1zM999 759h1v1h-1zM999 770h1v1h-1zM999 782h1v1h-1zM999 793h1v1h-1zM999 805h1v1h-1zM999 816h1v1h-1zM999 828h1v1h-1zM999 839h1v1h-1zM999 851h1v1h-1zM999 862h1v1h-1zM999 882h1v1h-1zM999 894h1v1h-1zM999 905h1v1h-1zM999 917h1v1h-1zM999 928h1v1h-1zM999 940h1v1h-1zM999 951h1v1h-1zM999 963h1v1h-1zM999 974h1v1h-1zM999 986h1v1h-1zM1034 57h1v1h-1zM1034 68h1v1h-1zM1034 80h1v1h-1zM1034 91h1v1h-1zM1034 103h1v1h-1zM1034 114h1v1h-1zM1034 126h1v1h-1zM1034 137h1v1h-1zM1034 149h1v1h-1zM1034 160h1v1h-1zM1034 176h1v1h-1zM1034 188h1v1h-1zM1034 199h1v1h-1zM1034 211h1v1h-1zM1034 222h1v1h-1zM1034 234h1v1h-1zM1034 245h1v1h-1zM1034 257h1v1h-1zM1034 268h1v1h-1zM1034 280h1v1h-1zM1034 291h1v1h-1zM1034 302h1v1h-1zM1034 314h1v1h-1zM1034 325h1v1h-1zM1034 337h1v1h-1zM1034 348h1v1h-1zM1034 360h1v1h-1zM1034 371h1v1h-1zM1034 383h1v1h-1zM1034 394h1v1h-1zM1034 407h1v1h-1zM1034 419h1v1h-1zM1034 430h1v1h-1zM1034 442h1v1h-1zM1034 453h1v1h-1zM1034 465h1v1h-1zM1034 476h1v1h-1zM1034 488h1v1h-1zM1034 499h1v1h-1zM1034 511h1v1h-1zM1034 522h1v1h-1zM1034 525h1v1h-1zM1034 536h1v1h-1zM1034 548h1v1h-1zM1034 559h1v1h-1zM1034 571h1v1h-1zM1034 582h1v1h-1zM1034 594h1v1h-1zM1034 605h1v1h-1zM1034 617h1v1h-1zM1034 628h1v1h-1zM1034 642h1v1h-1zM1034 653h1v1h-1zM1034 665h1v1h-1zM1034 676h1v1h-1zM1034 688h1v1h-1zM1034 699h1v1h-1zM1034 711h1v1h-1zM1034 722h1v1h-1zM1034 734h1v1h-1zM1034 759h1v1h-1zM1034 770h1v1h-1zM1034 782h1v1h-1zM1034 793h1v1h-1zM1034 805h1v1h-1zM1034 816h1v1h-1zM1034 828h1v1h-1zM1034 839h1v1h-1zM1034 851h1v1h-1zM1034 862h1v1h-1zM1034 882h1v1h-1zM1034 894h1v1h-1zM1034 905h1v1h-1zM1034 917h1v1h-1zM1034 928h1v1h-1zM1034 940h1v1h-1zM1034 951h1v1h-1zM1034 963h1v1h-1zM1034 974h1v1h-1zM1034 986h1v1h-1zM1069 57h1v1h-1zM1069 68h1v1h-1zM1069 80h1v1h-1zM1069 91h1v1h-1zM1069 103h1v1h-1zM1069 114h1v1h-1zM1069 126h1v1h-1zM1069 137h1v1h-1zM1069 149h1v1h-1zM1069 160h1v1h-1zM1069 176h1v1h-1zM1069 188h1v1h-1zM1069 199h1v1h-1zM1069 211h1v1h-1zM1069 222h1v1h-1zM1069 234h1v1h-1zM1069 245h1v1h-1zM1069 257h1v1h-1zM1069 268h1v1h-1zM1069 280h1v1h-1zM1069 291h1v1h-1zM1069 302h1v1h-1zM1069 314h1v1h-1zM1069 325h1v1h-1zM1069 337h1v1h-1zM1069 348h1v1h-1zM1069 360h1v1h-1zM1069 371h1v1h-1zM1069 383h1v1h-1zM1069 394h1v1h-1zM1069 407h1v1h-1zM1069 419h1v1h-1zM1069 430h1v1h-1zM1069 442h1v1h-1zM1069 453h1v1h-1zM1069 465h1v1h-1zM1069 476h1v1h-1zM1069 488h1v1h-1zM1069 499h1v1h-1zM1069 511h1v1h-1zM1069 522h1v1h-1zM1069 525h1v1h-1zM1069 536h1v1h-1zM1069 548h1v1h-1zM1069 559h1v1h-1zM1069 571h1v1h-1zM1069 582h1v1h-1zM1069 594h1v1h-1zM1069 605h1v1h-1zM1069 617h1v1h-1zM1069 628h1v1h-1zM1069 642h1v1h-1zM1069 653h1v1h-1zM1069 665h1v1h-1zM1069 676h1v1h-1zM1069 688h1v1h-1zM1069 699h1v1h-1zM1069 711h1v1h-1zM1069 722h1v1h-1zM1069 734h1v1h-1zM1069 759h1v1h-1zM1069 770h1v1h-1zM1069 782h1v1h-1zM1069 793h1v1h-1zM1069 805h1v1h-1zM1069 816h1v1h-1zM1069 828h1v1h-1zM1069 839h1v1h-1zM1069 851h1v1h-1zM1069 862h1v1h-1zM1069 882h1v1h-1zM1069 894h1v1h-1zM1069 905h1v1h-1zM1069 917h1v1h-1zM1069 928h1v1h-1zM1069 940h1v1h-1zM1069 951h1v1h-1zM1069 963h1v1h-1zM1069 974h1v1h-1zM1069 986h1v1h-1zM1139 57h1v1h-1zM1139 68h1v1h-1zM1139 80h1v1h-1zM1139 91h1v1h-1zM1139 103h1v1h-1zM1139 114h1v1h-1zM1139 126h1v1h-1zM1139 137h1v1h-1zM1139 149h1v1h-1zM1139 160h1v1h-1zM1139 176h1v1h-1zM1139 188h1v1h-1zM1139 199h1v1h-1zM1139 211h1v1h-1zM1139 222h1v1h-1zM1139 234h1v1h-1zM1139 245h1v1h-1zM1139 257h1v1h-1zM1139 268h1v1h-1zM1139 280h1v1h-1zM1139 291h1v1h-1zM1139 302h1v1h-1zM1139 314h1v1h-1zM1139 325h1v1h-1zM1139 337h1v1h-1zM1139 348h1v1h-1zM1139 360h1v1h-1zM1139 371h1v1h-1zM1139 383h1v1h-1zM1139 394h1v1h-1zM1139 407h1v1h-1zM1139 419h1v1h-1zM1139 430h1v1h-1zM1139 442h1v1h-1zM1139 453h1v1h-1zM1139 465h1v1h-1zM1139 476h1v1h-1zM1139 488h1v1h-1zM1139 499h1v1h-1zM1139 511h1v1h-1zM1139 522h1v1h-1zM1139 525h1v1h-1zM1139 536h1v1h-1zM1139 548h1v1h-1zM1139 559h1v1h-1zM1139 571h1v1h-1zM1139 582h1v1h-1zM1139 594h1v1h-1zM1139 605h1v1h-1zM1139 617h1v1h-1zM1139 628h1v1h-1zM1139 642h1v1h-1zM1139 653h1v1h-1zM1139 665h1v1h-1zM1139 676h1v1h-1zM1139 688h1v1h-1zM1139 699h1v1h-1zM1139 711h1v1h-1zM1139 722h1v1h-1zM1139 734h1v1h-1zM1139 759h1v1h-1zM1139 770h1v1h-1zM1139 782h1v1h-1zM1139 793h1v1h-1zM1139 805h1v1h-1zM1139 816h1v1h-1zM1139 828h1v1h-1zM1139 839h1v1h-1zM1139 851h1v1h-1zM1139 862h1v1h-1zM1139 882h1v1h-1zM1139 894h1v1h-1zM1139 905h1v1h-1zM1139 917h1v1h-1zM1139 928h1v1h-1zM1139 940h1v1h-1zM1139 951h1v1h-1zM1139 963h1v1h-1zM1139 974h1v1h-1zM1139 986h1v1h-1zM1174 57h1v1h-1zM1174 68h1v1h-1zM1174 80h1v1h-1zM1174 91h1v1h-1zM1174 103h1v1h-1zM1174 114h1v1h-1zM1174 126h1v1h-1zM1174 137h1v1h-1zM1174 149h1v1h-1zM1174 160h1v1h-1zM1174 176h1v1h-1zM1174 188h1v1h-1zM1174 199h1v1h-1zM1174 211h1v1h-1zM1174 222h1v1h-1zM1174 234h1v1h-1zM1174 245h1v1h-1zM1174 257h1v1h-1zM1174 268h1v1h-1zM1174 280h1v1h-1zM1174 291h1v1h-1zM1174 302h1v1h-1zM1174 314h1v1h-1zM1174 325h1v1h-1zM1174 337h1v1h-1zM1174 348h1v1h-1zM1174 360h1v1h-1zM1174 371h1v1h-1zM1174 383h1v1h-1zM1174 394h1v1h-1zM1174 407h1v1h-1zM1174 419h1v1h-1zM1174 430h1v1h-1zM1174 442h1v1h-1zM1174 453h1v1h-1zM1174 465h1v1h-1zM1174 476h1v1h-1zM1174 488h1v1h-1zM1174 499h1v1h-1zM1174 511h1v1h-1zM1174 522h1v1h-1zM1174 525h1v1h-1zM1174 536h1v1h-1zM1174 548h1v1h-1zM1174 559h1v1h-1zM1174 571h1v1h-1zM1174 582h1v1h-1zM1174 594h1v1h-1zM1174 605h1v1h-1zM1174 617h1v1h-1zM1174 628h1v1h-1zM1174 642h1v1h-1zM1174 653h1v1h-1zM1174 665h1v1h-1zM1174 676h1v1h-1zM1174 688h1v1h-1zM1174 699h1v1h-1zM1174 711h1v1h-1zM1174 722h1v1h-1zM1174 734h1v1h-1zM1174 759h1v1h-1zM1174 770h1v1h-1zM1174 782h1v1h-1zM1174 793h1v1h-1zM1174 805h1v1h-1zM1174 816h1v1h-1zM1174 828h1v1h-1zM1174 839h1v1h-1zM1174 851h1v1h-1zM1174 862h1v1h-1zM1174 882h1v1h-1zM1174 894h1v1h-1zM1174 905h1v1h-1zM1174 917h1v1h-1zM1174 928h1v1h-1zM1174 940h1v1h-1zM1174 951h1v1h-1zM1174 963h1v1h-1zM1174 974h1v1h-1zM1174 986h1v1h-1zM1209 57h1v1h-1zM1209 68h1v1h-1zM1209 80h1v1h-1zM1209 91h1v1h-1zM1209 103h1v1h-1zM1209 114h1v1h-1zM1209 126h1v1h-1zM1209 137h1v1h-1zM1209 149h1v1h-1zM1209 160h1v1h-1zM1209 176h1v1h-1zM1209 188h1v1h-1zM1209 199h1v1h-1zM1209 211h1v1h-1zM1209 222h1v1h-1zM1209 234h1v1h-1zM1209 245h1v1h-1zM1209 257h1v1h-1zM1209 268h1v1h-1zM1209 280h1v1h-1zM1209 291h1v1h-1zM1209 302h1v1h-1zM1209 314h1v1h-1zM1209 325h1v1h-1zM1209 337h1v1h-1zM1209 348h1v1h-1zM1209 360h1v1h-1zM1209 371h1v1h-1zM1209 383h1v1h-1zM1209 394h1v1h-1zM1209 407h1v1h-1zM1209 419h1v1h-1zM1209 430h1v1h-1zM1209 442h1v1h-1zM1209 453h1v1h-1zM1209 465h1v1h-1zM1209 476h1v1h-1zM1209 488h1v1h-1zM1209 499h1v1h-1zM1209 511h1v1h-1zM1209 522h1v1h-1zM1209 525h1v1h-1zM1209 536h1v1h-1zM1209 548h1v1h-1zM1209 559h1v1h-1zM1209 571h1v1h-1zM1209 582h1v1h-1zM1209 594h1v1h-1zM1209 605h1v1h-1zM1209 617h1v1h-1zM1209 628h1v1h-1zM1209 642h1v1h-1zM1209 653h1v1h-1zM1209 665h1v1h-1zM1209 676h1v1h-1zM1209 688h1v1h-1zM1209 699h1v1h-1zM1209 711h1v1h-1zM1209 722h1v1h-1zM1209 734h1v1h-1zM1209 759h1v1h-1zM1209 770h1v1h-1zM1209 782h1v1h-1zM1209 793h1v1h-1zM1209 805h1v1h-1zM1209 816h1v1h-1zM1209 828h1v1h-1zM1209 839h1v1h-1zM1209 851h1v1h-1zM1209 862h1v1h-1zM1209 882h1v1h-1zM1209 894h1v1h-1zM1209 905h1v1h-1zM1209 917h1v1h-1zM1209 928h1v1h-1zM1209 940h1v1h-1zM1209 951h1v1h-1zM1209 963h1v1h-1zM1209 974h1v1h-1zM1209 986h1v1h-1zM1244 57h1v1h-1zM1244 68h1v1h-1zM1244 80h1v1h-1zM1244 91h1v1h-1zM1244 103h1v1h-1zM1244 114h1v1h-1zM1244 126h1v1h-1zM1244 137h1v1h-1zM1244 149h1v1h-1zM1244 160h1v1h-1zM1244 176h1v1h-1zM1244 188h1v1h-1zM1244 199h1v1h-1zM1244 211h1v1h-1zM1244 222h1v1h-1zM1244 234h1v1h-1zM1244 245h1v1h-1zM1244 257h1v1h-1zM1244 268h1v1h-1zM1244 280h1v1h-1zM1244 291h1v1h-1zM1244 302h1v1h-1zM1244 314h1v1h-1zM1244 325h1v1h-1zM1244 337h1v1h-1zM1244 348h1v1h-1zM1244 360h1v1h-1zM1244 371h1v1h-1zM1244 383h1v1h-1zM1244 394h1v1h-1zM1244 407h1v1h-1zM1244 419h1v1h-1zM1244 430h1v1h-1zM1244 442h1v1h-1zM1244 453h1v1h-1zM1244 465h1v1h-1zM1244 476h1v1h-1zM1244 488h1v1h-1zM1244 499h1v1h-1zM1244 511h1v1h-1zM1244 522h1v1h-1zM1244 525h1v1h-1zM1244 536h1v1h-1zM1244 548h1v1h-1zM1244 559h1v1h-1zM1244 571h1v1h-1zM1244 582h1v1h-1zM1244 594h1v1h-1zM1244 605h1v1h-1zM1244 617h1v1h-1zM1244 628h1v1h-1zM1244 642h1v1h-1zM1244 653h1v1h-1zM1244 665h1v1h-1zM1244 676h1v1h-1zM1244 688h1v1h-1zM1244 699h1v1h-1zM1244 711h1v1h-1zM1244 722h1v1h-1zM1244 734h1v1h-1zM1244 759h1v1h-1zM1244 770h1v1h-1zM1244 782h1v1h-1zM1244 793h1v1h-1zM1244 805h1v1h-1zM1244 816h1v1h-1zM1244 828h1v1h-1zM1244 839h1v1h-1zM1244 851h1v1h-1zM1244 862h1v1h-1zM1244 882h1v1h-1zM1244 894h1v1h-1zM1244 905h1v1h-1zM1244 917h1v1h-1zM1244 928h1v1h-1zM1244 940h1v1h-1zM1244 951h1v1h-1zM1244 963h1v1h-1zM1244 974h1v1h-1zM1244 986h1v1h-1zM1314 57h1v1h-1zM1314 68h1v1h-1zM1314 80h1v1h-1zM1314 91h1v1h-1zM1314 103h1v1h-1zM1314 114h1v1h-1zM1314 126h1v1h-1zM1314 137h1v1h-1zM1314 149h1v1h-1zM1314 160h1v1h-1zM1314 176h1v1h-1zM1314 188h1v1h-1zM1314 199h1v1h-1zM1314 211h1v1h-1zM1314 222h1v1h-1zM1314 234h1v1h-1zM1314 245h1v1h-1zM1314 257h1v1h-1zM1314 268h1v1h-1zM1314 280h1v1h-1zM1314 291h1v1h-1zM1314 302h1v1h-1zM1314 314h1v1h-1zM1314 325h1v1h-1zM1314 337h1v1h-1zM1314 348h1v1h-1zM1314 360h1v1h-1zM1314 371h1v1h-1zM1314 383h1v1h-1zM1314 394h1v1h-1zM1314 407h1v1h-1zM1314 419h1v1h-1zM1314 430h1v1h-1zM1314 442h1v1h-1zM1314 453h1v1h-1zM1314 465h1v1h-1zM1314 476h1v1h-1zM1314 488h1v1h-1zM1314 499h1v1h-1zM1314 511h1v1h-1zM1314 522h1v1h-1zM1314 525h1v1h-1zM1314 536h1v1h-1zM1314 548h1v1h-1zM1314 559h1v1h-1zM1314 571h1v1h-1zM1314 582h1v1h-1zM1314 594h1v1h-1zM1314 605h1v1h-1zM1314 617h1v1h-1zM1314 628h1v1h-1zM1314 642h1v1h-1zM1314 653h1v1h-1zM1314 665h1v1h-1zM1314 676h1v1h-1zM1314 688h1v1h-1zM1314 699h1v1h-1zM1314 711h1v1h-1zM1314 722h1v1h-1zM1314 734h1v1h-1zM1314 759h1v1h-1zM1314 770h1v1h-1zM1314 782h1v1h-1zM1314 793h1v1h-1zM1314 805h1v1h-1zM1314 816h1v1h-1zM1314 828h1v1h-1zM1314 839h1v1h-1zM1314 851h1v1h-1zM1314 862h1v1h-1zM1314 882h1v1h-1zM1314 894h1v1h-1zM1314 905h1v1h-1zM1314 917h1v1h-1zM1314 928h1v1h-1zM1314 940h1v1h-1zM1314 951h1v1h-1zM1314 963h1v1h-1zM1314 974h1v1h-1zM1314 986h1v1h-1zM1349 57h1v1h-1zM1349 68h1v1h-1zM1349 80h1v1h-1zM1349 91h1v1h-1zM1349 103h1v1h-1zM1349 114h1v1h-1zM1349 126h1v1h-1zM1349 137h1v1h-1zM1349 149h1v1h-1zM1349 160h1v1h-1zM1349 176h1v1h-1zM1349 188h1v1h-1zM1349 199h1v1h-1zM1349 211h1v1h-1zM1349 222h1v1h-1zM1349 234h1v1h-1zM1349 245h1v1h-1zM1349 257h1v1h-1zM1349 268h1v1h-1zM1349 280h1v1h-1zM1349 291h1v1h-1zM1349 302h1v1h-1zM1349 314h1v1h-1zM1349 325h1v1h-1zM1349 337h1v1h-1zM1349 348h1v1h-1zM1349 360h1v1h-1zM1349 371h1v1h-1zM1349 383h1v1h-1zM1349 394h1v1h-1zM1349 407h1v1h-1zM1349 419h1v1h-1zM1349 430h1v1h-1zM1349 442h1v1h-1zM1349 453h1v1h-1zM1349 465h1v1h-1zM1349 476h1v1h-1zM1349 488h1v1h-1zM1349 499h1v1h-1zM1349 511h1v1h-1zM1349 522h1v1h-1zM1349 525h1v1h-1zM1349 536h1v1h-1zM1349 548h1v1h-1zM1349 559h1v1h-1zM1349 571h1v1h-1zM1349 582h1v1h-1zM1349 594h1v1h-1zM1349 605h1v1h-1zM1349 617h1v1h-1zM1349 628h1v1h-1zM1349 642h1v1h-1zM1349 653h1v1h-1zM1349 665h1v1h-1zM1349 676h1v1h-1zM1349 688h1v1h-1zM1349 699h1v1h-1zM1349 711h1v1h-1zM1349 722h1v1h-1zM1349 734h1v1h-1zM1349 759h1v1h-1zM1349 770h1v1h-1zM1349 782h1v1h-1zM1349 793h1v1h-1zM1349 805h1v1h-1zM1349 816h1v1h-1zM1349 828h1v1h-1zM1349 839h1v1h-1zM1349 851h1v1h-1zM1349 862h1v1h-1zM1349 882h1v1h-1zM1349 894h1v1h-1zM1349 905h1v1h-1zM1349 917h1v1h-1zM1349 928h1v1h-1zM1349 940h1v1h-1zM1349 951h1v1h-1zM1349 963h1v1h-1zM1349 974h1v1h-1zM1349 986h1v1h-1zM1384 57h1v1h-1zM1384 68h1v1h-1zM1384 80h1v1h-1zM1384 91h1v1h-1zM1384 103h1v1h-1zM1384 114h1v1h-1zM1384 126h1v1h-1zM1384 137h1v1h-1zM1384 149h1v1h-1zM1384 160h1v1h-1zM1384 176h1v1h-1zM1384 188h1v1h-1zM1384 199h1v1h-1zM1384 211h1v1h-1zM1384 222h1v1h-1zM1384 234h1v1h-1zM1384 245h1v1h-1zM1384 257h1v1h-1zM1384 268h1v1h-1zM1384 280h1v1h-1zM1384 291h1v1h-1zM1384 302h1v1h-1zM1384 314h1v1h-1zM1384 325h1v1h-1zM1384 337h1v1h-1zM1384 348h1v1h-1zM1384 360h1v1h-1zM1384 371h1v1h-1zM1384 383h1v1h-1zM1384 394h1v1h-1zM1384 407h1v1h-1zM1384 419h1v1h-1zM1384 430h1v1h-1zM1384 442h1v1h-1zM1384 453h1v1h-1zM1384 465h1v1h-1zM1384 476h1v1h-1zM1384 488h1v1h-1zM1384 499h1v1h-1zM1384 511h1v1h-1zM1384 522h1v1h-1zM1384 525h1v1h-1zM1384 536h1v1h-1zM1384 548h1v1h-1zM1384 559h1v1h-1zM1384 571h1v1h-1zM1384 582h1v1h-1zM1384 594h1v1h-1zM1384 605h1v1h-1zM1384 617h1v1h-1zM1384 628h1v1h-1zM1384 642h1v1h-1zM1384 653h1v1h-1zM1384 665h1v1h-1zM1384 676h1v1h-1zM1384 688h1v1h-1zM1384 699h1v1h-1zM1384 711h1v1h-1zM1384 722h1v1h-1zM1384 734h1v1h-1zM1384 759h1v1h-1zM1384 770h1v1h-1zM1384 782h1v1h-1zM1384 793h1v1h-1zM1384 805h1v1h-1zM1384 816h1v1h-1zM1384 828h1v1h-1zM1384 839h1v1h-1zM1384 851h1v1h-1zM1384 862h1v1h-1zM1384 882h1v1h-1zM1384 894h1v1h-1zM1384 905h1v1h-1zM1384 917h1v1h-1zM1384 928h1v1h-1zM1384 940h1v1h-1zM1384 951h1v1h-1zM1384 963h1v1h-1zM1384 974h1v1h-1zM1384 986h1v1h-1zM1419 57h1v1h-1zM1419 68h1v1h-1zM1419 80h1v1h-1zM1419 91h1v1h-1zM1419 103h1v1h-1zM1419 114h1v1h-1zM1419 126h1v1h-1zM1419 137h1v1h-1zM1419 149h1v1h-1zM1419 160h1v1h-1zM1419 176h1v1h-1zM1419 188h1v1h-1zM1419 199h1v1h-1zM1419 211h1v1h-1zM1419 222h1v1h-1zM1419 234h1v1h-1zM1419 245h1v1h-1zM1419 257h1v1h-1zM1419 268h1v1h-1zM1419 280h1v1h-1zM1419 291h1v1h-1zM1419 302h1v1h-1zM1419 314h1v1h-1zM1419 325h1v1h-1zM1419 337h1v1h-1zM1419 348h1v1h-1zM1419 360h1v1h-1zM1419 371h1v1h-1zM1419 383h1v1h-1zM1419 394h1v1h-1zM1419 407h1v1h-1zM1419 419h1v1h-1zM1419 430h1v1h-1zM1419 442h1v1h-1zM1419 453h1v1h-1zM1419 465h1v1h-1zM1419 476h1v1h-1zM1419 488h1v1h-1zM1419 499h1v1h-1zM1419 511h1v1h-1zM1419 522h1v1h-1zM1419 525h1v1h-1zM1419 536h1v1h-1zM1419 548h1v1h-1zM1419 559h1v1h-1zM1419 571h1v1h-1zM1419 582h1v1h-1zM1419 594h1v1h-1zM1419 605h1v1h-1zM1419 617h1v1h-1zM1419 628h1v1h-1zM1419 642h1v1h-1zM1419 653h1v1h-1zM1419 665h1v1h-1zM1419 676h1v1h-1zM1419 688h1v1h-1zM1419 699h1v1h-1zM1419 711h1v1h-1zM1419 722h1v1h-1zM1419 734h1v1h-1zM1419 759h1v1h-1zM1419 770h1v1h-1zM1419 782h1v1h-1zM1419 793h1v1h-1zM1419 805h1v1h-1zM1419 816h1v1h-1zM1419 828h1v1h-1zM1419 839h1v1h-1zM1419 851h1v1h-1zM1419 862h1v1h-1zM1419 882h1v1h-1zM1419 894h1v1h-1zM1419 905h1v1h-1zM1419 917h1v1h-1zM1419 928h1v1h-1zM1419 940h1v1h-1zM1419 951h1v1h-1zM1419 963h1v1h-1zM1419 974h1v1h-1zM1419 986h1v1h-1zM1489 57h1v1h-1zM1489 68h1v1h-1zM1489 80h1v1h-1zM1489 91h1v1h-1zM1489 103h1v1h-1zM1489 114h1v1h-1zM1489 126h1v1h-1zM1489 137h1v1h-1zM1489 149h1v1h-1zM1489 160h1v1h-1zM1489 176h1v1h-1zM1489 188h1v1h-1zM1489 199h1v1h-1zM1489 211h1v1h-1zM1489 222h1v1h-1zM1489 234h1v1h-1zM1489 245h1v1h-1zM1489 257h1v1h-1zM1489 268h1v1h-1zM1489 280h1v1h-1zM1489 291h1v1h-1zM1489 302h1v1h-1zM1489 314h1v1h-1zM1489 325h1v1h-1zM1489 337h1v1h-1zM1489 348h1v1h-1zM1489 360h1v1h-1zM1489 371h1v1h-1zM1489 383h1v1h-1zM1489 394h1v1h-1zM1489 407h1v1h-1zM1489 419h1v1h-1zM1489 430h1v1h-1zM1489 442h1v1h-1zM1489 453h1v1h-1zM1489 465h1v1h-1zM1489 476h1v1h-1zM1489 488h1v1h-1zM1489 499h1v1h-1zM1489 511h1v1h-1zM1489 522h1v1h-1zM1489 525h1v1h-1zM1489 536h1v1h-1zM1489 548h1v1h-1zM1489 559h1v1h-1zM1489 571h1v1h-1zM1489 582h1v1h-1zM1489 594h1v1h-1zM1489 605h1v1h-1zM1489 617h1v1h-1zM1489 628h1v1h-1zM1489 642h1v1h-1zM1489 653h1v1h-1zM1489 665h1v1h-1zM1489 676h1v1h-1zM1489 688h1v1h-1zM1489 699h1v1h-1zM1489 711h1v1h-1zM1489 722h1v1h-1zM1489 734h1v1h-1zM1489 759h1v1h-1zM1489 770h1v1h-1zM1489 782h1v1h-1zM1489 793h1v1h-1zM1489 805h1v1h-1zM1489 816h1v1h-1zM1489 828h1v1h-1zM1489 839h1v1h-1zM1489 851h1v1h-1zM1489 862h1v1h-1zM1489 882h1v1h-1zM1489 894h1v1h-1zM1489 905h1v1h-1zM1489 917h1v1h-1zM1489 928h1v1h-1zM1489 940h1v1h-1zM1489 951h1v1h-1zM1489 963h1v1h-1zM1489 974h1v1h-1zM1489 986h1v1h-1zM1524 57h1v1h-1zM1524 68h1v1h-1zM1524 80h1v1h-1zM1524 91h1v1h-1zM1524 103h1v1h-1zM1524 114h1v1h-1zM1524 126h1v1h-1zM1524 137h1v1h-1zM1524 149h1v1h-1zM1524 160h1v1h-1zM1524 176h1v1h-1zM1524 188h1v1h-1zM1524 199h1v1h-1zM1524 211h1v1h-1zM1524 222h1v1h-1zM1524 234h1v1h-1zM1524 245h1v1h-1zM1524 257h1v1h-1zM1524 268h1v1h-1zM1524 280h1v1h-1zM1524 291h1v1h-1zM1524 302h1v1h-1zM1524 314h1v1h-1zM1524 325h1v1h-1zM1524 337h1v1h-1zM1524 348h1v1h-1zM1524 360h1v1h-1zM1524 371h1v1h-1zM1524 383h1v1h-1zM1524 394h1v1h-1zM1524 407h1v1h-1zM1524 419h1v1h-1zM1524 430h1v1h-1zM1524 442h1v1h-1zM1524 453h1v1h-1zM1524 465h1v1h-1zM1524 476h1v1h-1zM1524 488h1v1h-1zM1524 499h1v1h-1zM1524 511h1v1h-1zM1524 522h1v1h-1zM1524 525h1v1h-1zM1524 536h1v1h-1zM1524 548h1v1h-1zM1524 559h1v1h-1zM1524 571h1v1h-1zM1524 582h1v1h-1zM1524 594h1v1h-1zM1524 605h1v1h-1zM1524 617h1v1h-1zM1524 628h1v1h-1zM1524 642h1v1h-1zM1524 653h1v1h-1zM1524 665h1v1h-1zM1524 676h1v1h-1zM1524 688h1v1h-1zM1524 699h1v1h-1zM1524 711h1v1h-1zM1524 722h1v1h-1zM1524 734h1v1h-1zM1524 759h1v1h-1zM1524 770h1v1h-1zM1524 782h1v1h-1zM1524 793h1v1h-1zM1524 805h1v1h-1zM1524 816h1v1h-1zM1524 828h1v1h-1zM1524 839h1v1h-1zM1524 851h1v1h-1zM1524 862h1v1h-1zM1524 882h1v1h-1zM1524 894h1v1h-1zM1524 905h1v1h-1zM1524 917h1v1h-1zM1524 928h1v1h-1zM1524 940h1v1h-1zM1524 951h1v1h-1zM1524 963h1v1h-1zM1524 974h1v1h-1zM1524 986h1v1h-1zM1559 57h1v1h-1zM1559 68h1v1h-1zM1559 80h1v1h-1zM1559 91h1v1h-1zM1559 103h1v1h-1zM1559 114h1v1h-1zM1559 126h1v1h-1zM1559 137h1v1h-1zM1559 149h1v1h-1zM1559 160h1v1h-1zM1559 176h1v1h-1zM1559 188h1v1h-1zM1559 199h1v1h-1zM1559 211h1v1h-1zM1559 222h1v1h-1zM1559 234h1v1h-1zM1559 245h1v1h-1zM1559 257h1v1h-1zM1559 268h1v1h-1zM1559 280h1v1h-1zM1559 291h1v1h-1zM1559 302h1v1h-1zM1559 314h1v1h-1zM1559 325h1v1h-1zM1559 337h1v1h-1zM1559 348h1v1h-1zM1559 360h1v1h-1zM1559 371h1v1h-1zM1559 383h1v1h-1zM1559 394h1v1h-1zM1559 407h1v1h-1zM1559 419h1v1h-1zM1559 430h1v1h-1zM1559 442h1v1h-1zM1559 453h1v1h-1zM1559 465h1v1h-1zM1559 476h1v1h-1zM1559 488h1v1h-1zM1559 499h1v1h-1zM1559 511h1v1h-1zM1559 522h1v1h-1zM1559 525h1v1h-1zM1559 536h1v1h-1zM1559 548h1v1h-1zM1559 559h1v1h-1zM1559 571h1v1h-1zM1559 582h1v1h-1zM1559 594h1v1h-1zM1559 605h1v1h-1zM1559 617h1v1h-1zM1559 628h1v1h-1zM1559 642h1v1h-1zM1559 653h1v1h-1zM1559 665h1v1h-1zM1559 676h1v1h-1zM1559 688h1v1h-1zM1559 699h1v1h-1zM1559 711h1v1h-1zM1559 722h1v1h-1zM1559 734h1v1h-1zM1559 759h1v1h-1zM1559 770h1v1h-1zM1559 782h1v1h-1zM1559 793h1v1h-1zM1559 805h1v1h-1zM1559 816h1v1h-1zM1559 828h1v1h-1zM1559 839h1v1h-1zM1559 851h1v1h-1zM1559 862h1v1h-1zM1559 882h1v1h-1zM1559 894h1v1h-1zM1559 905h1v1h-1zM1559 917h1v1h-1zM1559 928h1v1h-1zM1559 940h1v1h-1zM1559 951h1v1h-1zM1559 963h1v1h-1zM1559 974h1v1h-1zM1559 986h1v1h-1zM1594 57h1v1h-1zM1594 68h1v1h-1zM1594 80h1v1h-1zM1594 91h1v1h-1zM1594 103h1v1h-1zM1594 114h1v1h-1zM1594 126h1v1h-1zM1594 137h1v1h-1zM1594 149h1v1h-1zM1594 160h1v1h-1zM1594 176h1v1h-1zM1594 188h1v1h-1zM1594 199h1v1h-1zM1594 211h1v1h-1zM1594 222h1v1h-1zM1594 234h1v1h-1zM1594 245h1v1h-1zM1594 257h1v1h-1zM1594 268h1v1h-1zM1594 280h1v1h-1zM1594 291h1v1h-1zM1594 302h1v1h-1zM1594 314h1v1h-1zM1594 325h1v1h-1zM1594 337h1v1h-1zM1594 348h1v1h-1zM1594 360h1v1h-1zM1594 371h1v1h-1zM1594 383h1v1h-1zM1594 394h1v1h-1zM1594 407h1v1h-1zM1594 419h1v1h-1zM1594 430h1v1h-1zM1594 442h1v1h-1zM1594 453h1v1h-1zM1594 465h1v1h-1zM1594 476h1v1h-1zM1594 488h1v1h-1zM1594 499h1v1h-1zM1594 511h1v1h-1zM1594 522h1v1h-1zM1594 525h1v1h-1zM1594 536h1v1h-1zM1594 548h1v1h-1zM1594 559h1v1h-1zM1594 571h1v1h-1zM1594 582h1v1h-1zM1594 594h1v1h-1zM1594 605h1v1h-1zM1594 617h1v1h-1zM1594 628h1v1h-1zM1594 642h1v1h-1zM1594 653h1v1h-1zM1594 665h1v1h-1zM1594 676h1v1h-1zM1594 688h1v1h-1zM1594 699h1v1h-1zM1594 711h1v1h-1zM1594 722h1v1h-1zM1594 734h1v1h-1zM1594 759h1v1h-1zM1594 770h1v1h-1zM1594 782h1v1h-1zM1594 793h1v1h-1zM1594 805h1v1h-1zM1594 816h1v1h-1zM1594 828h1v1h-1zM1594 839h1v1h-1zM1594 851h1v1h-1zM1594 862h1v1h-1zM1594 882h1v1h-1zM1594 894h1v1h-1zM1594 905h1v1h-1zM1594 917h1v1h-1zM1594 928h1v1h-1zM1594 940h1v1h-1zM1594 951h1v1h-1zM1594 963h1v1h-1zM1594 974h1v1h-1zM1594 986h1v1h-1zM1664 57h1v1h-1zM1664 68h1v1h-1zM1664 80h1v1h-1zM1664 91h1v1h-1zM1664 103h1v1h-1zM1664 114h1v1h-1zM1664 126h1v1h-1zM1664 137h1v1h-1zM1664 149h1v1h-1zM1664 160h1v1h-1zM1664 176h1v1h-1zM1664 188h1v1h-1zM1664 199h1v1h-1zM1664 211h1v1h-1zM1664 222h1v1h-1zM1664 234h1v1h-1zM1664 245h1v1h-1zM1664 257h1v1h-1zM1664 268h1v1h-1zM1664 280h1v1h-1zM1664 291h1v1h-1zM1664 302h1v1h-1zM1664 314h1v1h-1zM1664 325h1v1h-1zM1664 337h1v1h-1zM1664 348h1v1h-1zM1664 360h1v1h-1zM1664 371h1v1h-1zM1664 383h1v1h-1zM1664 394h1v1h-1zM1664 407h1v1h-1zM1664 419h1v1h-1zM1664 430h1v1h-1zM1664 442h1v1h-1zM1664 453h1v1h-1zM1664 465h1v1h-1zM1664 476h1v1h-1zM1664 488h1v1h-1zM1664 499h1v1h-1zM1664 511h1v1h-1zM1664 522h1v1h-1zM1664 525h1v1h-1zM1664 536h1v1h-1zM1664 548h1v1h-1zM1664 559h1v1h-1zM1664 571h1v1h-1zM1664 582h1v1h-1zM1664 594h1v1h-1zM1664 605h1v1h-1zM1664 617h1v1h-1zM1664 628h1v1h-1zM1664 642h1v1h-1zM1664 653h1v1h-1zM1664 665h1v1h-1zM1664 676h1v1h-1zM1664 688h1v1h-1zM1664 699h1v1h-1zM1664 711h1v1h-1zM1664 722h1v1h-1zM1664 734h1v1h-1zM1664 759h1v1h-1zM1664 770h1v1h-1zM1664 782h1v1h-1zM1664 793h1v1h-1zM1664 805h1v1h-1zM1664 816h1v1h-1zM1664 828h1v1h-1zM1664 839h1v1h-1zM1664 851h1v1h-1zM1664 862h1v1h-1zM1664 882h1v1h-1zM1664 894h1v1h-1zM1664 905h1v1h-1zM1664 917h1v1h-1zM1664 928h1v1h-1zM1664 940h1v1h-1zM1664 951h1v1h-1zM1664 963h1v1h-1zM1664 974h1v1h-1zM1664 986h1v1h-1zM1699 57h1v1h-1zM1699 68h1v1h-1zM1699 80h1v1h-1zM1699 91h1v1h-1zM1699 103h1v1h-1zM1699 114h1v1h-1zM1699 126h1v1h-1zM1699 137h1v1h-1zM1699 149h1v1h-1zM1699 160h1v1h-1zM1699 176h1v1h-1zM1699 188h1v1h-1zM1699 199h1v1h-1zM1699 211h1v1h-1zM1699 222h1v1h-1zM1699 234h1v1h-1zM1699 245h1v1h-1zM1699 257h1v1h-1zM1699 268h1v1h-1zM1699 280h1v1h-1zM1699 291h1v1h-1zM1699 302h1v1h-1zM1699 314h1v1h-1zM1699 325h1v1h-1zM1699 337h1v1h-1zM1699 348h1v1h-1zM1699 360h1v1h-1zM1699 371h1v1h-1zM1699 383h1v1h-1zM1699 394h1v1h-1zM1699 407h1v1h-1zM1699 419h1v1h-1zM1699 430h1v1h-1zM1699 442h1v1h-1zM1699 453h1v1h-1zM1699 465h1v1h-1zM1699 476h1v1h-1zM1699 488h1v1h-1zM1699 499h1v1h-1zM1699 511h1v1h-1zM1699 522h1v1h-1zM1699 525h1v1h-1zM1699 536h1v1h-1zM1699 548h1v1h-1zM1699 559h1v1h-1zM1699 571h1v1h-1zM1699 582h1v1h-1zM1699 594h1v1h-1zM1699 605h1v1h-1zM1699 617h1v1h-1zM1699 628h1v1h-1zM1699 642h1v1h-1zM1699 653h1v1h-1zM1699 665h1v1h-1zM1699 676h1v1h-1zM1699 688h1v1h-1zM1699 699h1v1h-1zM1699 711h1v1h-1zM1699 722h1v1h-1zM1699 734h1v1h-1zM1699 759h1v1h-1zM1699 770h1v1h-1zM1699 782h1v1h-1zM1699 793h1v1h-1zM1699 805h1v1h-1zM1699 816h1v1h-1zM1699 828h1v1h-1zM1699 839h1v1h-1zM1699 851h1v1h-1zM1699 862h1v1h-1zM1699 882h1v1h-1zM1699 894h1v1h-1zM1699 905h1v1h-1zM1699 917h1v1h-1zM1699 928h1v1h-1zM1699 940h1v1h-1zM1699 951h1v1h-1zM1699 963h1v1h-1zM1699 974h1v1h-1zM1699 986h1v1h-1zM1734 57h1v1h-1zM1734 68h1v1h-1zM1734 80h1v1h-1zM1734 91h1v1h-1zM1734 103h1v1h-1zM1734 114h1v1h-1zM1734 126h1v1h-1zM1734 137h1v1h-1zM1734 149h1v1h-1zM1734 160h1v1h-1zM1734 176h1v1h-1zM1734 188h1v1h-1zM1734 199h1v1h-1zM1734 211h1v1h-1zM1734 222h1v1h-1zM1734 234h1v1h-1zM1734 245h1v1h-1zM1734 257h1v1h-1zM1734 268h1v1h-1zM1734 280h1v1h-1zM1734 291h1v1h-1zM1734 302h1v1h-1zM1734 314h1v1h-1zM1734 325h1v1h-1zM1734 337h1v1h-1zM1734 348h1v1h-1zM1734 360h1v1h-1zM1734 371h1v1h-1zM1734 383h1v1h-1zM1734 394h1v1h-1zM1734 407h1v1h-1zM1734 419h1v1h-1zM1734 430h1v1h-1zM1734 442h1v1h-1zM1734 453h1v1h-1zM1734 465h1v1h-1zM1734 476h1v1h-1zM1734 488h1v1h-1zM1734 499h1v1h-1zM1734 511h1v1h-1zM1734 522h1v1h-1zM1734 525h1v1h-1zM1734 536h1v1h-1zM1734 548h1v1h-1zM1734 559h1v1h-1zM1734 571h1v1h-1zM1734 582h1v1h-1zM1734 594h1v1h-1zM1734 605h1v1h-1zM1734 617h1v1h-1zM1734 628h1v1h-1zM1734 642h1v1h-1zM1734 653h1v1h-1zM1734 665h1v1h-1zM1734 676h1v1h-1zM1734 688h1v1h-1zM1734 699h1v1h-1zM1734 711h1v1h-1zM1734 722h1v1h-1zM1734 734h1v1h-1zM1734 759h1v1h-1zM1734 770h1v1h-1zM1734 782h1v1h-1zM1734 793h1v1h-1zM1734 805h1v1h-1zM1734 816h1v1h-1zM1734 828h1v1h-1zM1734 839h1v1h-1zM1734 851h1v1h-1zM1734 862h1v1h-1zM1734 882h1v1h-1zM1734 894h1v1h-1zM1734 905h1v1h-1zM1734 917h1v1h-1zM1734 928h1v1h-1zM1734 940h1v1h-1zM1734 951h1v1h-1zM1734 963h1v1h-1zM1734 974h1v1h-1zM1734 986h1v1h-1z" fill="#3c3c3c"/><line x1="230.5" y1="57" x2="230.5" y2="990" stroke="#3c3c3c" stroke-width="1" stroke-dasharray="1 1 1 1 1 2" shape-rendering="crispEdges"/><line x1="405.5" y1="57" x2="405.5" y2="990" stroke="#3c3c3c" stroke-width="1" stroke-dasharray="1 1 1 1 1 2" shape-rendering="crispEdges"/><line x1="580.5" y1="57" x2="580.5" y2="990" stroke="#3c3c3c" stroke-width="1" stroke-dasharray="1 1 1 1 1 2" shape-rendering="crispEdges"/><line x1="755.5" y1="57" x2="755.5" y2="990" stroke="#3c3c3c" stroke-width="1" stroke-dasharray="1 1 1 1 1 2" shape-rendering="crispEdges"/><line x1="929.5" y1="57" x2="929.5" y2="990" stroke="#3c3c3c" stroke-width="1" stroke-dasharray="1 1 1 1 1 2" shape-rendering="crispEdges"/><line x1="1104.5" y1="57" x2="1104.5" y2="990" stroke="#3c3c3c" stroke-width="1" stroke-dasharray="1 1 1 1 1 2" shape-rendering="crispEdges"/><line x1="1279.5" y1="57" x2="1279.5" y2="990" stroke="#3c3c3c" stroke-width="1" stroke-dasharray="1 1 1 1 1 2" shape-rendering="crispEdges"/><line x1="1454.5" y1="57" x2="1454.5" y2="990" stroke="#3c3c3c" stroke-width="1" stroke-dasharray="1 1 1 1 1 2" shape-rendering="crispEdges"/><line x1="1629.5" y1="57" x2="1629.5" y2="990" stroke="#3c3c3c" stroke-width="1" stroke-dasharray="1 1 1 1 1 2" shape-rendering="crispEdges"/><line x1="55.5" y1="57" x2="55.5" y2="990" stroke="#333" stroke-width="1" stroke-dasharray="5 5"/><rect x="1713.05" y="85.5" width="37.95" height="13" fill="#fff"/><rect x="1713.05" y="108.5" width="37.95" height="13" fill="#fff"/><rect x="1713.05" y="131.5" width="37.95" height="13" fill="#fff"/><rect x="1720.58" y="154.5" width="30.42" height="13" fill="#fff"/><rect x="1701.61" y="181.5" width="49.39" height="13" fill="#fff"/><rect x="1694.39" y="204.5" width="56.61" height="13" fill="#fff"/><rect x="1694.39" y="227.5" width="56.61" height="13" fill="#fff"/><rect x="1689.76" y="250.5" width="61.24" height="13" fill="#fff"/><rect x="1689.76" y="273.5" width="61.24" height="13" fill="#fff"/><rect x="1701.61" y="296.5" width="49.39" height="13" fill="#fff"/><rect x="1694.39" y="319.5" width="56.61" height="13" fill="#fff"/><rect x="1720.58" y="342.5" width="30.42" height="13" fill="#fff"/><rect x="1689.76" y="365.5" width="61.24" height="13" fill="#fff"/><rect x="1696.98" y="388.5" width="54.02" height="13" fill="#fff"/><rect x="1720.58" y="413.5" width="30.42" height="13" fill="#fff"/><rect x="1694.39" y="436.5" width="56.61" height="13" fill="#fff"/><rect x="1694.39" y="459.5" width="56.61" height="13" fill="#fff"/><rect x="1689.76" y="482.5" width="61.24" height="13" fill="#fff"/><rect x="1689.76" y="505.5" width="61.24" height="13" fill="#fff"/><rect x="1720.58" y="530.5" width="30.42" height="13" fill="#fff"/><rect x="1720.58" y="553.5" width="30.42" height="13" fill="#fff"/><rect x="1720.58" y="576.5" width="30.42" height="13" fill="#fff"/><rect x="1715.96" y="599.5" width="35.04" height="13" fill="#fff"/><rect x="1715.96" y="622.5" width="35.04" height="13" fill="#fff"/><rect x="1720.58" y="647.5" width="30.42" height="13" fill="#fff"/><rect x="1701.61" y="670.5" width="49.39" height="13" fill="#fff"/><rect x="1720.58" y="693.5" width="30.42" height="13" fill="#fff"/><rect x="1701.61" y="716.5" width="49.39" height="13" fill="#fff"/><rect x="1720.58" y="739.5" width="30.42" height="13" fill="#fff"/><rect x="1669.58" y="764.5" width="81.42" height="13" fill="#fff"/><rect x="1668.61" y="787.5" width="82.39" height="13" fill="#fff"/><rect x="1668.61" y="810.5" width="82.39" height="13" fill="#fff"/><rect x="1676.14" y="833.5" width="74.86" height="13" fill="#fff"/><rect x="1721.55" y="855.5" width="29.45" height="13" fill="#fff"/><rect x="1664.67" y="876.5" width="86.33" height="13" fill="#fff"/><rect x="1664.67" y="899.5" width="86.33" height="13" fill="#fff"/><rect x="1664.67" y="922.5" width="86.33" height="13" fill="#fff"/><rect x="1664.67" y="945.5" width="86.33" height="13" fill="#fff"/><rect x="1721.3" y="968.5" width="29.7" height="13" fill="#fff"/>
<path d="M3 160 L113 160 L115 157 L118 154.5 L123 152 L130 149.5 L140 146.5 L150 144 L160 141.8 L170 139.5 L180 137.5 L190 135.5 L200 133.5 L208 132 L212 131 L215 131.5 L220 134.5 L225 137.5 L235 139 L257 141 L275 143.2 L293 144.5 L330 145 L357 145 L400 144 L400 144 L401 143.99 L401 144.06 L403.13 144.06 L403.13 144.04 L405.3 144.04 L405.3 144.03 L406.76 144.03 L406.76 143.53 L409.74 143.53 L409.74 143.86 L410.97 143.86 L410.97 144.42 L412.07 144.42 L412.07 144.45 L412.57 143.18 L413.07 144.45 L414.71 144.45 L414.71 144.05 L415.21 142.76 L415.71 144.05 L415.85 144.05 L415.85 144.41 L417.96 144.41 L417.96 144.38 L420.56 144.38 L420.56 144.08 L422.7 144.08 L422.7 144.32 L426.19 144.32 L426.19 143.96 L426.69 145.29 L427.19 143.96 L427.98 143.96 L427.98 144.26 L429.98 144.26 L429.98 144.23 L430.48 145.75 L430.98 144.23 L433.37 144.23 L433.37 144.19 L435.55 144.19 L435.55 144.17 L436.73 144.17 L436.73 143.66 L438.41 143.66 L438.41 143.95 L438.91 142.39 L439.41 143.95 L441.82 146.45 L441.82 140.89 L442.32 138.94 L442.82 138.39 L442.97 138.39 L442.97 137.1 L443.47 135.05 L443.97 137.1 L444.44 137.1 L444.44 136.76 L444.94 139.22 L445.44 136.76 L446.49 136.76 L446.49 137.1 L446.99 138.84 L447.49 137.1 L448.25 137.1 L448.25 136.62 L450.86 136.62 L450.86 136.33 L452.39 136.33 L452.39 136.09 L452.89 134.72 L453.39 136.09 L454.21 136.09 L454.21 136.21 L455.82 136.21 L455.82 136.76 L457.95 136.76 L457.95 141.62 L458.45 143.06 L458.95 141.62 L460.39 141.62 L460.39 141.37 L460.89 143.54 L461.39 141.37 L463.44 141.37 L463.44 141.73 L464.93 141.73 L464.93 141.66 L465.43 142.96 L465.93 141.66 L467.44 141.66 L467.44 141.81 L467.94 139.53 L468.44 141.81 L469.03 141.81 L469.03 141.45 L470.77 141.45 L470.77 141.16 L471.94 141.16 L471.94 141.32 L472.44 138.92 L472.94 141.32 L475.07 141.32 L475.07 141.11 L476.11 141.11 L476.11 140.78 L477.26 140.78 L477.26 140.81 L479.69 140.81 L479.69 141.43 L482.92 141.43 L482.92 136.07 L483.42 134.77 L483.92 136.07 L485.65 136.07 L485.65 135.91 L488.92 135.91 L488.92 136.19 L489.98 136.19 L489.98 136.01 L492.8 136.01 L492.8 136.17 L493.99 136.17 L493.99 136.49 L497.24 136.49 L497.24 137.92 L500.22 137.92 L500.22 142.1 L502.94 142.1 L502.94 142.1 L504.98 142.1 L504.98 142.1 L507.41 142.1 L507.41 142.1 L507.91 144.15 L508.41 142.1 L509.87 142.1 L509.87 142.1 L513.07 142.1 L513.07 142.1 L515.91 142.1 L515.91 141.6 L519 141.6 L519 141.72 L520.08 141.72 L520.08 141.96 L521.65 141.96 L521.65 142.1 L522.15 140.84 L522.65 142.1 L524.19 142.1 L524.19 141.74 L524.69 139.36 L525.19 141.74 L526.88 141.74 L526.88 141.35 L528.99 141.35 L528.99 140.14 L531.65 140.14 L531.65 140.11 L534.67 140.11 L534.67 140.13 L536.63 140.13 L536.63 140.14 L537.97 140.14 L537.97 140.15 L541.09 140.15 L541.09 139.77 L542.78 139.77 L542.78 139.44 L544.47 139.44 L544.47 139.44 L547.03 139.44 L547.03 140.03 L550.13 140.03 L550.13 139.49 L551.32 139.49 L551.32 139.75 L552.42 139.75 L552.42 140.1 L552.92 138.68 L553.42 140.1 L554.2 140.1 L554.2 140.25 L554.7 138.82 L555.2 140.25 L555.26 140.25 L555.26 140.19 L557.83 140.19 L557.83 140.27 L560.47 140.27 L560.47 139.92 L563.18 139.92 L563.18 139.35 L564.63 139.35 L564.63 139.11 L565.13 137.43 L565.63 139.11 L567.41 139.11 L567.41 139.26 L569.71 139.26 L569.71 139.63 L571.7 139.63 L571.7 140.16 L572.91 140.16 L572.91 140.11 L574.24 140.11 L574.24 139.97 L577.51 139.97 L577.51 140.34 L580.71 140.34 L580.71 140.38 L581.21 142.53 L581.71 140.38 L582.87 140.38 L582.87 140.31 L583.37 142.68 L583.87 140.31 L585.48 140.31 L585.48 140.22 L588.92 140.22 L588.92 140.11 L590.72 140.11 L590.72 139.55 L592.59 139.55 L592.59 139.81 L594.97 139.81 L594.97 139.91 L595.47 137.66 L595.97 139.91 L596.04 139.91 L596.04 139.88 L596.54 138.44 L597.04 139.88 L597.88 139.88 L597.88 139.82 L600.68 139.82 L600.68 139.72 L604.05 139.72 L604.05 139.28 L605.26 139.28 L605.26 139.51 L606.99 139.51 L606.99 139.52 L609.3 139.52 L609.3 139.31 L611.08 139.31 L611.08 138.9 L614.33 138.9 L614.33 138.82 L617.75 138.82 L617.75 138.75 L619.25 138.75 L619.25 138.14 L621.76 138.14 L621.76 137.93 L624.05 137.93 L624.05 137.85 L626.46 137.85 L626.46 137.81 L627.63 137.81 L627.63 138.28 L628.13 136.44 L628.63 138.28 L631.02 138.28 L631.02 138.55 L633.1 138.55 L633.1 138.26 L633.6 140.28 L634.1 138.26 L635.29 138.26 L635.29 138.52 L635.79 137.03 L636.29 138.52 L636.62 138.52 L636.62 138.26 L639.33 138.26 L639.33 137.7 L641.88 137.7 L641.88 137.63 L642.38 136.13 L642.88 137.63 L643.19 137.63 L643.19 137.43 L645.28 137.43 L645.28 137.06 L645.78 135.02 L646.28 137.06 L647.61 137.06 L647.61 137.4 L649.93 137.4 L649.93 137 L653.07 137 L653.07 128.54 L656.1 128.54 L656.1 132.14 L656.6 134.64 L657.1 132.14 L657.89 132.14 L657.89 133.92 L659.22 133.92 L659.22 134.55 L660.87 134.55 L660.87 135.98 L661.37 134.22 L661.87 135.98 L662.92 135.98 L662.92 136.65 L663.97 136.65 L663.97 137.25 L664.47 139.13 L664.97 137.25 L667.25 137.25 L667.25 137.47 L667.75 136.13 L668.25 137.47 L669.5 137.47 L669.5 136.52 L670.6 136.52 L670.6 135.14 L671.1 136.64 L671.6 135.14 L673.02 135.14 L673.02 135.75 L673.52 137.08 L674.02 135.75 L676.49 135.75 L676.49 135.92 L678.65 135.92 L678.65 136.03 L680.82 136.03 L680.82 135.56 L683.32 135.56 L683.32 135.3 L686.43 135.3 L686.43 135.34 L686.93 133.88 L687.43 135.34 L689.28 135.34 L689.28 135.96 L690.32 135.96 L690.32 136.5 L693.08 136.5 L693.08 137.31 L695.09 137.31 L695.09 137.87 L695.59 140.26 L696.09 137.87 L698.55 137.87 L698.55 138.74 L701.49 138.74 L701.49 132.64 L704.73 132.64 L704.73 132.4 L707.65 132.4 L707.65 134.29 L710.46 134.29 L710.46 134.98 L712.63 134.98 L712.63 136 L713.13 133.57 L713.63 136 L715.23 136 L715.23 136.41 L717.07 136.41 L717.07 136.34 L719.4 136.34 L719.4 136.66 L722.01 136.66 L722.01 136.2 L725.46 136.2 L725.46 136.32 L727 136.32 L727 136.97 L728 137 L728 137 L729 146 L731 132 L734 121.5 L736 126 L738 137 L740 129 L742 132 L743 144 L745 127 L747 122 L749 119 L751 114 L753 115 L755 107 L757 102 L758.5 85 L759.5 60 L760 45" fill="none" stroke="#111" stroke-width="1.2" stroke-linejoin="round" /><path d="M777 55 L785 64 L792 71.5 L805 85 L818 97 L830 107.5 L842 115.5 L855 122.5 L868 129 L880 135 L893 140 L905 144.5 L918 147.5 L930 149.5 L945 150.6 L960 151.2 L1100 153 L1280 155 L1440 156.3 L1750 157.5" fill="none" stroke="#111" stroke-width="1.2" stroke-linejoin="round" /><path d="M3 245 L54.5 245 L54.5 228 L55 194 L55.21 243.72 L55.42 197.48 L55.62 242.67 L55.83 210.36 L56.04 236.45 L56.25 204.18 L56.46 238.73 L56.67 208.33 L56.88 235.71 L57.08 211.29 L57.29 235.87 L57.5 213.85 L57.71 233.31 L57.92 217.06 L58.12 233.05 L58.33 217.92 L58.54 233.32 L58.75 219.67 L58.96 231.27 L59.17 223.59 L59.38 229.89 L59.58 226.26 L59.79 228.81 L60.5 228 L63 228 L66 228 L148 228 L149 224 L150 232 L151 225 L152 231 L153 227 L154 228 L160 228 L270 228.5 L270 228.5 L270 227.92 L270.5 224.93 L271 227.92 L273.4 227.92 L273.4 228.21 L274.7 228.21 L274.7 227.79 L277.92 227.79 L277.92 227.99 L279.72 227.99 L279.72 228.69 L282.43 228.69 L282.43 229.34 L283.55 229.34 L283.55 228.85 L285.33 228.85 L285.33 229.48 L287.79 229.48 L287.79 229.51 L291.19 229.51 L291.19 229.17 L293.72 229.17 L293.72 229.58 L295.5 229.58 L295.5 229.03 L298.13 229.03 L298.13 228.56 L298.63 226.26 L299.13 228.56 L300.8 228.56 L300.8 228.6 L304.11 228.6 L304.11 228.9 L306.13 228.9 L306.13 228.72 L307.9 228.72 L307.9 228.89 L309.65 228.89 L309.65 229.19 L311.73 229.19 L311.73 229.8 L312.95 229.8 L312.95 229.66 L315.03 229.66 L315.03 229.7 L318.41 229.7 L318.41 229.88 L318.91 227.56 L319.41 229.88 L319.65 229.88 L319.65 229.66 L320.15 228.11 L320.65 229.66 L321.47 229.66 L321.47 229.91 L321.97 227.37 L322.47 229.91 L324.46 229.91 L324.46 229.95 L326.49 229.95 L326.49 229.97 L328.64 229.97 L328.64 230 L330.95 230 L330.95 229.98 L333.81 229.98 L333.81 229.78 L336.42 229.78 L336.42 229.99 L339.47 229.99 L339.47 230.02 L340.51 230.02 L340.51 229.51 L342.36 229.51 L342.36 229.16 L342.86 226.21 L343.36 229.16 L344.45 229.16 L344.45 228.73 L344.95 225.93 L345.45 228.73 L345.75 228.73 L345.75 228.6 L347.44 228.6 L347.44 228.62 L348.96 228.62 L348.96 229.17 L349.46 231.24 L349.96 229.17 L352.27 229.17 L352.27 228.74 L353.35 228.74 L353.35 229.15 L355.31 229.15 L355.31 228.77 L355.81 226.87 L356.31 228.77 L357.47 228.77 L357.47 228.74 L360.13 228.74 L360.13 228.77 L362.75 228.77 L362.75 228.8 L365.26 228.8 L365.26 229.26 L365.76 231.71 L366.26 229.26 L366.33 229.26 L366.33 228.85 L369.45 228.85 L369.45 228.88 L370.8 228.88 L370.8 228.9 L373.84 228.9 L373.84 228.94 L376.44 228.94 L376.44 229.05 L379.67 229.05 L379.67 229.11 L380.17 227.19 L380.67 229.11 L382.8 229.11 L382.8 229.16 L385.89 229.16 L385.89 229.96 L386.39 232.06 L386.89 229.96 L388.94 229.96 L388.94 229.81 L391.84 229.81 L391.84 229.3 L392.34 227.24 L392.84 229.3 L393.33 229.3 L393.33 230.07 L393.83 232.41 L394.33 230.07 L395.62 230.07 L395.62 230.14 L398.12 230.14 L398.12 230.83 L399.17 230.83 L399.17 230.84 L399.67 229.24 L400.17 230.84 L402.19 230.84 L402.19 230.87 L404.45 230.87 L404.45 230.9 L406.48 230.9 L406.48 230.92 L408.31 230.92 L408.31 230.95 L411.13 230.95 L411.13 230.69 L411.63 228.84 L412.13 230.69 L413.76 230.69 L413.76 230.4 L414.26 228.43 L414.76 230.4 L417.07 230.4 L417.07 230.17 L417.57 227.96 L418.07 230.17 L419.19 230.17 L419.19 230.7 L421.07 230.7 L421.07 231.1 L423.42 231.1 L423.42 230.39 L425.36 230.39 L425.36 229.96 L425.86 228.1 L426.36 229.96 L427.65 229.96 L427.65 229.58 L428.99 229.58 L428.99 229.59 L432.04 229.59 L432.04 229.64 L432.54 227.63 L433.04 229.64 L435.05 229.64 L435.05 229.8 L438.33 229.8 L438.33 229.7 L440.91 229.7 L440.91 230.01 L443.93 230.01 L443.93 229.77 L444.43 228.04 L444.93 229.77 L445.65 229.77 L445.65 229.79 L448.59 229.79 L448.59 230.03 L449.09 227.15 L449.59 230.03 L451.18 230.03 L451.18 229.86 L452.94 229.86 L452.94 229.88 L456.27 229.88 L456.27 229.92 L458.66 229.92 L458.66 230.04 L461.96 230.04 L461.96 230.67 L463.61 230.67 L463.61 230.73 L465.18 230.73 L465.18 230.91 L465.68 228.58 L466.18 230.91 L467.61 230.91 L467.61 230.74 L470.6 230.74 L470.6 230.34 L473.05 230.34 L473.05 230.75 L473.55 228.34 L474.05 230.75 L474.37 230.75 L474.37 230.17 L477.32 230.17 L477.32 230.17 L477.82 228.11 L478.32 230.17 L480.1 230.17 L480.1 230.2 L481.75 230.2 L481.75 230.23 L484.78 230.23 L484.78 230.27 L485.28 228.21 L485.78 230.27 L487.05 230.27 L487.05 230.3 L488.49 230.3 L488.49 230.33 L490.12 230.33 L490.12 230.47 L490.62 232.24 L491.12 230.47 L492.86 230.47 L492.86 230.39 L493.36 227.65 L493.86 230.39 L493.99 230.39 L493.99 230.61 L497.3 230.61 L497.3 231.03 L497.8 228.33 L498.3 231.03 L499.38 231.03 L499.38 230.81 L500.48 230.81 L500.48 231.48 L501.85 231.48 L501.85 232.12 L504.13 232.12 L504.13 231.61 L506.47 231.61 L506.47 231.57 L509.77 231.57 L509.77 231.81 L510.95 231.81 L510.95 231.49 L512.93 231.49 L512.93 230.99 L513.43 228.52 L513.93 230.99 L515.91 230.99 L515.91 230.74 L518.95 230.74 L518.95 230.78 L519.45 229.11 L519.95 230.78 L521.09 230.78 L521.09 231.28 L523.98 231.28 L523.98 231.58 L525.75 231.58 L525.75 230.94 L527.67 230.94 L527.67 230.91 L529.22 230.91 L529.22 231.57 L529.72 234.41 L530.22 231.57 L530.41 231.57 L530.41 232.22 L531.44 232.22 L531.44 232.56 L533.75 232.56 L533.75 232.04 L534.82 232.04 L534.82 232.58 L535.32 230.55 L535.82 232.58 L537.96 232.58 L537.96 232.39 L539.53 232.39 L539.53 232.66 L540.03 229.83 L540.53 232.66 L540.91 232.66 L540.91 232.7 L542.98 232.7 L542.98 232.13 L543.48 233.98 L543.98 232.13 L544.62 232.13 L544.62 232.48 L545.12 230.88 L545.62 232.48 L546.51 232.48 L546.51 232.79 L547.01 230.97 L547.51 232.79 L548.49 232.79 L548.49 232.81 L550.12 232.81 L550.12 232.12 L551.69 232.12 L551.69 231.52 L554.15 231.52 L554.15 231.3 L557.08 231.3 L557.08 231.8 L559.79 231.8 L559.79 231.87 L560.29 229.6 L560.79 231.87 L561.95 231.87 L561.95 231.41 L562.45 229.83 L562.95 231.41 L563.75 231.41 L563.75 231.53 L565.34 231.53 L565.34 231.46 L566.92 231.46 L566.92 231.79 L569.62 231.79 L569.62 231.53 L572.07 231.53 L572.07 231.56 L572.57 233.7 L573.07 231.56 L575.07 231.56 L575.07 231.61 L576.31 231.61 L576.31 231.63 L576.81 228.97 L577.31 231.63 L579.49 231.63 L579.49 231.83 L581.23 231.83 L581.23 231.7 L581.73 229.65 L582.23 231.7 L584.38 231.7 L584.38 232.17 L586.07 232.17 L586.07 231.77 L587.74 231.77 L587.74 232.27 L591.16 232.27 L591.16 232.73 L594.02 232.73 L594.02 233.49 L596.25 233.49 L596.25 233.41 L596.75 235.47 L597.25 233.41 L597.84 233.41 L597.84 233.47 L600.05 233.47 L600.05 233.27 L601.27 233.27 L601.27 233.59 L603.51 233.59 L603.51 233.63 L606.51 233.63 L606.51 233.67 L608.86 233.67 L608.86 233.54 L611.34 233.54 L611.34 233.38 L614.25 233.38 L614.25 233.79 L617.07 233.79 L617.07 233.62 L617.57 236.11 L618.07 233.62 L619.5 233.62 L619.5 233.87 L620 231.34 L620.5 233.87 L622.3 233.87 L622.3 233.91 L624.27 233.91 L624.27 233.22 L624.77 231.4 L625.27 233.22 L626.44 233.22 L626.44 232.53 L626.94 234.16 L627.44 232.53 L628.75 232.53 L628.75 232.96 L632.17 232.96 L632.17 233.47 L632.67 231.85 L633.17 233.47 L633.5 233.47 L633.5 233.18 L636.66 233.18 L636.66 233.98 L638.49 233.98 L638.49 234.15 L641.65 234.15 L641.65 234.19 L643.14 234.19 L643.14 233.78 L645.95 233.78 L645.95 233.32 L647.66 233.32 L647.66 233.43 L650.66 233.43 L650.66 233.25 L652.23 233.25 L652.23 232.97 L652.73 231.03 L653.23 232.97 L653.91 232.97 L653.91 233.2 L656.47 233.2 L656.47 232.81 L659.14 232.81 L659.14 233.25 L661.45 233.25 L661.45 233.24 L662.68 233.24 L662.68 233.18 L663.18 231.62 L663.68 233.18 L665.64 233.18 L665.64 232.95 L668.52 232.95 L668.52 233.09 L669.02 231.45 L669.52 233.09 L671.01 233.09 L671.01 233.76 L672.77 233.76 L672.77 234.31 L676.24 234.31 L676.24 234.46 L678.34 234.46 L678.34 233.94 L680.17 233.94 L680.17 233.77 L682.75 233.77 L682.75 233.92 L684.01 233.92 L684.01 234.25 L686.25 234.25 L686.25 234.5 L688.08 234.5 L688.08 234.02 L690.87 234.02 L690.87 234.51 L693.48 234.51 L693.48 234.96 L693.98 232.74 L694.48 234.96 L696.76 234.96 L696.76 234.38 L700.23 234.38 L700.23 234.32 L700.73 232.07 L701.23 234.32 L702.77 234.32 L702.77 234.7 L703.27 232.53 L703.77 234.7 L704.99 234.7 L704.99 235.13 L707.32 235.13 L707.32 234.63 L710.74 234.63 L710.74 235 L712.03 235 L712.03 234.99 L715.16 234.99 L715.16 235.22 L716.24 235.22 L716.24 234.6 L716.74 232.07 L717.24 234.6 L719.32 234.6 L719.32 234.49 L721.4 234.49 L721.4 235.06 L723.96 235.06 L723.96 235.01 L724.46 237.28 L724.96 235.01 L727.11 235.01 L727.11 235.02 L730.32 235.02 L730.32 234.33 L733.22 234.33 L733.22 233.95 L736.21 233.95 L736.21 234.01 L738.82 234.01 L738.82 234.03 L740.05 234.03 L740.05 234.05 L741.92 234.05 L741.92 234.08 L743.63 234.08 L743.63 234.65 L744.13 236.91 L744.63 234.65 L745 234.65 L745 234.93 L750 235 L750.5 235 L750.5 225.19 L750.75 249.4 L751 224.69 L751.25 243.47 L751.5 227.54 L751.75 243.52 L752 225.13 L752.25 243.83 L752.5 227.3 L752.75 240.51 L753 229.46 L753.25 239.55 L753.5 231.59 L753.75 238.08 L754 232.67 L754.25 238.11 L754.5 233.42 L754.75 236.48 L755.5 235 L760.5 236 L761 217 L761.25 246.19 L761.5 220.38 L761.75 247 L762 221.46 L762.25 245.77 L762.5 223.23 L762.75 244.72 L763 228.25 L763.25 242.29 L763.5 225.17 L763.75 242.02 L764 226.88 L764.25 239.87 L764.5 229.76 L764.75 239.49 L765 230.82 L765.25 239.32 L765.5 233.13 L765.75 238.06 L766 233.75 L766.25 237.93 L766.5 234.57 L766.75 236.66 L767.5 236 L807 236.5 L807 236.5 L807.5 226.5 L807.8 244.76 L808.1 229.07 L808.4 243.7 L808.7 231.74 L809 240.31 L809.3 234.1 L809.6 239.61 L809.9 234.92 L810.2 238.13 L811 236.5 L812 236.5 L823 236.5 L823 236.5 L823.5 225.5 L823.8 239.42 L824.1 230.69 L824.4 239.7 L824.7 230.82 L825 238.01 L825.3 232.92 L825.6 237.69 L825.9 235.13 L826.2 237.14 L827 236.5 L827 236.5 L844 236.5 L844 236.5 L844.5 228.5 L844.7 239.26 L844.9 230.2 L845.1 239.7 L845.3 233.38 L845.5 238.62 L845.7 234.47 L845.9 237.62 L846.1 234.9 L846.3 237.05 L847 236.5 L850.5 236.5 L851 217.5 L851.25 243.57 L851.5 224.04 L851.75 244.38 L852 227.16 L852.25 242.89 L852.5 229.34 L852.75 241.01 L853 227.39 L853.25 239.35 L853.5 230.65 L853.75 239.36 L854 233.57 L854.25 238.19 L854.5 234.41 L854.75 237.38 L855.5 236.5 L859.5 236.5 L860 227.5 L860.3 243.96 L860.6 230.94 L860.9 243.7 L861.2 232.01 L861.5 240.19 L861.8 233.17 L862.1 239.85 L862.4 234.95 L862.7 237.7 L863.5 236.5 L865 237 L914 237 L914 237 L914.5 227 L914.8 240.12 L915.1 230.41 L915.4 240.2 L915.7 231.18 L916 238.89 L916.3 233.79 L916.6 238.34 L916.9 235.65 L917.2 237.64 L918 237 L920 237 L960 237.5 L1000 238 L1002 239 L1100 239.5 L1102 240.5 L1200 241 L1202 242 L1300 242.5 L1302 243.5 L1440 244 L1540 244.5 L1542 246 L1750 246.5" fill="none" stroke="#1cbcc8" stroke-width="1.2" stroke-linejoin="round" /><line x1="117.5" y1="220" x2="117.5" y2="242" stroke="#1cbcc8" stroke-width="1"/><path d="M3 348.5 L54.5 348.5 L54.5 350 L55 296 L55.16 381.3 L55.31 305.66 L55.47 394.06 L55.62 309.65 L55.78 382.56 L55.94 319.88 L56.09 385.02 L56.25 312.61 L56.41 378.38 L56.56 320.22 L56.72 372.44 L56.88 329.71 L57.03 371.98 L57.19 324.66 L57.34 366.59 L57.5 325.23 L57.66 366.28 L57.81 333.63 L57.97 362.69 L58.12 329.77 L58.28 365.78 L58.44 333.97 L58.59 362.43 L58.75 341.72 L58.91 358.6 L59.06 341.91 L59.22 355.7 L59.38 343.38 L59.53 354.39 L59.69 347.77 L59.84 352.72 L60.5 350 L62 350 L66 351 L215 350 L240 350.5 L240 350.5 L240 350.74 L242.43 350.74 L242.43 351.07 L244.12 351.07 L244.12 350.55 L247.39 350.55 L247.39 350.64 L249.93 350.64 L249.93 350.6 L252.25 350.6 L252.25 350.3 L252.75 347.69 L253.25 350.3 L254.84 350.3 L254.84 350.79 L257.36 350.79 L257.36 351.63 L260.48 351.63 L260.48 351.01 L260.98 347.55 L261.48 351.01 L263.18 351.01 L263.18 351.8 L264.72 351.8 L264.72 351.51 L265.22 349.29 L265.72 351.51 L266.02 351.51 L266.02 351.19 L268.34 351.19 L268.34 350.55 L268.84 353.83 L269.34 350.55 L269.8 350.55 L269.8 350.34 L270.3 348.39 L270.8 350.34 L272.2 350.34 L272.2 350.4 L272.7 348.32 L273.2 350.4 L273.34 350.4 L273.34 350.43 L275.49 350.43 L275.49 351 L275.99 349.13 L276.49 351 L277.83 351 L277.83 351.56 L278.33 348.29 L278.83 351.56 L279.78 351.56 L279.78 351.51 L280.28 354.82 L280.78 351.51 L282.14 351.51 L282.14 351.56 L283.55 351.56 L283.55 350.85 L284.63 350.85 L284.63 350.81 L287.45 350.81 L287.45 350.79 L289.72 350.79 L289.72 350.84 L290.22 353.29 L290.72 350.84 L293.13 350.84 L293.13 350.93 L293.63 347.93 L294.13 350.93 L294.94 350.93 L294.94 351.2 L296.65 351.2 L296.65 351.84 L300.07 351.84 L300.07 352.68 L303.09 352.68 L303.09 352.82 L305.97 352.82 L305.97 352.87 L309.09 352.87 L309.09 352.12 L309.59 349.34 L310.09 352.12 L310.66 352.12 L310.66 351.55 L312.16 351.55 L312.16 352.31 L313.34 352.31 L313.34 352.83 L315.77 352.83 L315.77 352.81 L316.79 352.81 L316.79 352.81 L317.29 350.99 L317.79 352.81 L320.08 352.81 L320.08 352.79 L320.58 350.84 L321.08 352.79 L323.03 352.79 L323.03 352.77 L326.03 352.77 L326.03 352.76 L329.45 352.76 L329.45 351.85 L330.49 351.85 L330.49 351.53 L330.99 349.2 L331.49 351.53 L333.04 351.53 L333.04 351.43 L333.54 349.53 L334.04 351.43 L335.28 351.43 L335.28 350.9 L336.6 350.9 L336.6 351.44 L337.92 351.44 L337.92 351.68 L338.42 349.89 L338.92 351.68 L340.07 351.68 L340.07 351.42 L340.57 353.7 L341.07 351.42 L341.92 351.42 L341.92 351.32 L342.94 351.32 L342.94 351.72 L343.44 349.89 L343.94 351.72 L344.64 351.72 L344.64 351.43 L345.14 347.98 L345.64 351.43 L348.09 351.43 L348.09 351.11 L351.48 351.11 L351.48 350.81 L352.58 350.81 L352.58 351.33 L354.87 351.33 L354.87 350.8 L358.07 350.8 L358.07 350.78 L359.54 350.78 L359.54 351.33 L360.04 354.36 L360.54 351.33 L361.61 351.33 L361.61 350.84 L364.18 350.84 L364.18 351.37 L367.56 351.37 L367.56 350.72 L369.56 350.72 L369.56 350.71 L370.06 348.68 L370.56 350.71 L370.95 350.71 L370.95 350.71 L373.14 350.71 L373.14 350.69 L373.64 353.36 L374.14 350.69 L376.04 350.69 L376.04 350.8 L376.54 354.08 L377.04 350.8 L379.33 350.8 L379.33 350.84 L382.58 350.84 L382.58 351.34 L385.05 351.34 L385.05 351.34 L385.55 348.65 L386.05 351.34 L387.28 351.34 L387.28 351.25 L388.99 351.25 L388.99 350.8 L389.49 347.55 L389.99 350.8 L390.58 350.8 L390.58 351.57 L393.65 351.57 L393.65 351 L396.66 351 L396.66 350.56 L399.72 350.56 L399.72 351.33 L402.89 351.33 L402.89 350.53 L403.39 347.82 L403.89 350.53 L404.19 350.53 L404.19 350.79 L407.25 350.79 L407.25 350.5 L410.32 350.5 L410.32 350.49 L410.82 353.62 L411.32 350.49 L412.19 350.49 L412.19 350.87 L412.69 348.39 L413.19 350.87 L413.27 350.87 L413.27 350.74 L416.53 350.74 L416.53 350.45 L417.03 348.59 L417.53 350.45 L418.42 350.45 L418.42 350.87 L420.79 350.87 L420.79 351.74 L421.29 349.23 L421.79 351.74 L422.44 351.74 L422.44 352.22 L423.89 352.22 L423.89 351.63 L425.22 351.63 L425.22 351.27 L425.72 348.95 L426.22 351.27 L427.15 351.27 L427.15 351.42 L427.65 348.73 L428.15 351.42 L428.93 351.42 L428.93 352.07 L430.73 352.07 L430.73 351.9 L431.23 349.06 L431.73 351.9 L433.37 351.9 L433.37 351.95 L433.87 354.82 L434.37 351.95 L434.79 351.95 L434.79 352.15 L435.29 354.49 L435.79 352.15 L435.81 352.15 L435.81 351.81 L439.23 351.81 L439.23 352.13 L439.73 349.21 L440.23 352.13 L441.09 352.13 L441.09 352.12 L443.49 352.12 L443.49 352.1 L446.41 352.1 L446.41 352.09 L448.98 352.09 L448.98 352.07 L451.77 352.07 L451.77 352.06 L454.32 352.06 L454.32 352.04 L456.27 352.04 L456.27 352.03 L459.34 352.03 L459.34 352.01 L462.62 352.01 L462.62 352 L464.34 352 L464.34 351.47 L466.23 351.47 L466.23 350.93 L466.73 348.98 L467.23 350.93 L469.51 350.93 L469.51 350.45 L472.59 350.45 L472.59 350.14 L473.7 350.14 L473.7 350.13 L476.6 350.13 L476.6 350.12 L478.5 350.12 L478.5 350.11 L479.5 350.11 L479.5 350.1 L480 346.62 L480.5 350.1 L482.14 350.1 L482.14 350.6 L484.17 350.6 L484.17 350.69 L487.21 350.69 L487.21 350.54 L488.46 350.54 L488.46 350.29 L490.1 350.29 L490.1 350.04 L490.6 347.99 L491.1 350.04 L491.65 350.04 L491.65 350.12 L492.15 347.44 L492.65 350.12 L494.94 350.12 L494.94 350.9 L497.14 350.9 L497.14 351.39 L499.14 351.39 L499.14 351.2 L500.34 351.2 L500.34 351.59 L503.28 351.59 L503.28 351.76 L505.23 351.76 L505.23 351.75 L508.54 351.75 L508.54 351.51 L510.4 351.51 L510.4 351.15 L511.69 351.15 L511.69 350.58 L513.21 350.58 L513.21 349.9 L514.98 349.9 L514.98 349.89 L518.35 349.89 L518.35 349.87 L518.85 347 L519.35 349.87 L519.56 349.87 L519.56 350.15 L522.61 350.15 L522.61 350.28 L523.11 352.31 L523.61 350.28 L525.8 350.28 L525.8 350.52 L528.85 350.52 L528.85 350.33 L529.35 352.83 L529.85 350.33 L531.87 350.33 L531.87 349.79 L532.37 352.32 L532.87 349.79 L535.09 349.79 L535.09 350.37 L535.59 352.48 L536.09 350.37 L538.29 350.37 L538.29 350.03 L540.39 350.03 L540.39 349.99 L541.44 349.99 L541.44 350.68 L541.94 353.41 L542.44 350.68 L544.19 350.68 L544.19 350.54 L545.52 350.54 L545.52 351.03 L546.92 351.03 L546.92 351.5 L548.56 351.5 L548.56 351.49 L549.89 351.49 L549.89 350.63 L552.09 350.63 L552.09 351.06 L552.59 353.65 L553.09 351.06 L554.56 351.06 L554.56 350.45 L555.06 347.91 L555.56 350.45 L557.38 350.45 L557.38 351.22 L557.88 348.38 L558.38 351.22 L560.85 351.22 L560.85 351.25 L564.01 351.25 L564.01 351.39 L564.51 353.25 L565.01 351.39 L567.28 351.39 L567.28 351.37 L569.45 351.37 L569.45 351.36 L571.48 351.36 L571.48 351.16 L573.73 351.16 L573.73 351.08 L574.9 351.08 L574.9 351.33 L577.62 351.33 L577.62 351.31 L581.02 351.31 L581.02 351.04 L583.42 351.04 L583.42 351.27 L584.49 351.27 L584.49 350.52 L584.99 352.73 L585.49 350.52 L585.52 350.52 L585.52 351.26 L586.02 353.62 L586.52 351.26 L587.46 351.26 L587.46 351.25 L587.96 349.38 L588.46 351.25 L590.6 351.25 L590.6 350.52 L591.1 348.2 L591.6 350.52 L592.45 350.52 L592.45 351.22 L592.95 348.08 L593.45 351.22 L595.11 351.22 L595.11 351.2 L598.27 351.2 L598.27 351.18 L599.6 351.18 L599.6 350.33 L601.55 350.33 L601.55 350.79 L604.12 350.79 L604.12 349.95 L606.96 349.95 L606.96 349.67 L610.35 349.67 L610.35 349.53 L610.85 352.33 L611.35 349.53 L613.69 349.53 L613.69 349.86 L615.73 349.86 L615.73 350.59 L616.23 353.38 L616.73 350.59 L617.66 350.59 L617.66 350.19 L618.16 347.8 L618.66 350.19 L619.67 350.19 L619.67 349.72 L621.71 349.72 L621.71 349.28 L623.26 349.28 L623.26 349.23 L623.76 346.13 L624.26 349.23 L626.54 349.23 L626.54 350.06 L627.04 347.21 L627.54 350.06 L627.84 350.06 L627.84 349.82 L630.91 349.82 L630.91 350.17 L631.41 347.89 L631.91 350.17 L633.9 350.17 L633.9 350.54 L634.4 348.68 L634.9 350.54 L636.21 350.54 L636.21 349.94 L639.22 349.94 L639.22 350.74 L641.37 350.74 L641.37 350.01 L644.48 350.01 L644.48 349.16 L646.43 349.16 L646.43 349.43 L646.93 346.91 L647.43 349.43 L648.02 349.43 L648.02 350.01 L648.52 346.66 L649.02 350.01 L650.14 350.01 L650.14 349.61 L653.56 349.61 L653.56 349.91 L656.89 349.91 L656.89 350.73 L657.39 353.66 L657.89 350.73 L658.11 350.73 L658.11 350.82 L661.02 350.82 L661.02 350.31 L664.49 350.31 L664.49 349.73 L667.51 349.73 L667.51 349.08 L669.6 349.08 L669.6 349.52 L670.1 352.55 L670.6 349.52 L672.74 349.52 L672.74 350.28 L675.53 350.28 L675.53 350.7 L676.03 347.6 L676.53 350.7 L678.29 350.7 L678.29 350.38 L678.79 348.56 L679.29 350.38 L679.95 350.38 L679.95 349.86 L680.45 352.89 L680.95 349.86 L681.64 349.86 L681.64 350.23 L683.48 350.23 L683.48 350.35 L684.55 350.35 L684.55 350.66 L685.98 350.66 L685.98 350.65 L688.32 350.65 L688.32 350.64 L689.46 350.64 L689.46 350.2 L691.22 350.2 L691.22 350.62 L692.48 350.62 L692.48 350.61 L695.72 350.61 L695.72 350.14 L696.99 350.14 L696.99 350.35 L700.34 350.35 L700.34 350.27 L703.36 350.27 L703.36 350.55 L705.5 350.55 L705.5 350.54 L706.77 350.54 L706.77 350.52 L707.27 347.11 L707.77 350.52 L708.2 350.52 L708.2 349.62 L708.7 346.73 L709.2 349.62 L710.56 349.62 L710.56 349.74 L713.21 349.74 L713.21 350.49 L714.86 350.49 L714.86 350.48 L715.36 348 L715.86 350.48 L715.93 350.48 L715.93 349.88 L716.43 347.23 L716.93 349.88 L719.17 349.88 L719.17 350.23 L721.33 350.23 L721.33 350.05 L722.49 350.05 L722.49 350.43 L722.99 348.25 L723.49 350.43 L725.52 350.43 L725.52 350.41 L727 350.41 L727 349.51 L728 349.5 L728.5 349 L729 326 L729.31 356.86 L729.62 336.02 L729.94 360.38 L730.25 335.94 L730.56 357.52 L730.88 339.58 L731.19 354.24 L731.5 341.03 L731.81 354.87 L732.12 343.32 L732.44 353.37 L732.75 344.03 L733.06 351.13 L733.38 346.66 L733.69 350.27 L734.5 349 L735.5 350 L736 342 L736.33 355.05 L736.67 345.43 L737 356.67 L737.33 346.15 L737.67 355.12 L738 346.81 L738.33 353.55 L738.67 348.29 L739 352.14 L739.33 348.75 L739.67 351.08 L740.5 350 L743.5 350 L744 324 L744.35 373.19 L744.7 330.04 L745.05 375.2 L745.4 330.72 L745.75 365.92 L746.1 334.33 L746.45 368.74 L746.8 334.97 L747.15 361.33 L747.5 338.81 L747.85 361.86 L748.2 341.67 L748.55 361.05 L748.9 343.67 L749.25 356.54 L749.6 344.92 L749.95 354.78 L750.3 348.13 L750.65 352.03 L751.5 350 L751.5 350 L752.3 322 L753 377 L754 332 L754.8 362 L755.6 318 L756.4 352 L757.2 312 L758 346 L758.8 308 L759.6 342 L760.4 305 L761.2 338 L762 316 L762.8 334 L763.6 320 L764.5 330 L765.5 323 L767 324 L772 327 L778 326 L784 330 L792 332.5 L810 335 L830 337.5 L843 339 L843.5 339 L844 312 L844.25 361.13 L844.5 317.73 L844.75 362.62 L845 320.8 L845.25 358.16 L845.5 326.95 L845.75 355.64 L846 327.84 L846.25 351.14 L846.5 329.87 L846.75 348.84 L847 334.21 L847.25 344.04 L847.5 336.01 L847.75 341.82 L848.5 339 L852 340 L861 340.5 L861.5 341 L862 336 L862.25 345.39 L862.5 337.28 L862.75 345.5 L863 338.54 L863.25 343.9 L863.5 339.86 L863.75 342.43 L864.5 341 L866 341.5 L890 343 L917 346 L960 348 L1000 348.5 L1750 348.5" fill="none" stroke="#dc1e46" stroke-width="1.2" stroke-linejoin="round" /><path d="M3 476.5 L217 476.5 L222 474.5 L230 471 L240 466 L250 462 L260 458.5 L270 456.5 L285 455.5 L300 455 L350 456 L400 458 L450 457 L500 455 L550 452.5 L600 450 L650 448.5 L700 447.5 L740 446 L752 445 L760 444 L765 447 L773 452 L783 456.5 L798 461.5 L813 465.5 L833 469 L853 471.5 L878 473.8 L903 475 L940 476 L1750 476.5" fill="none" stroke="#78c030" stroke-width="1.2" stroke-linejoin="round" /><line x1="3" y1="582" x2="1751" y2="582" stroke="#f09030" stroke-width="1.2"/><path d="M3 746 L48 744.5 L55.5 744 L55.5 653.5 L117 653.5 L117.5 640.5 L124 640.5 L128 653.5 L151 653.5 L152 648 L154 653.5 L654 653.5 L654.5 651.5 L655.5 653.5 L660 653.5 L660.5 651.5 L661.5 653.5 L700 653.5 L700.5 651.5 L701.5 653.5 L731 653.5 L732 648 L733 653.5 L737 653.5 L737.5 651 L738.5 653.5 L750 653.5 L751 640.5 L755 640.5 L756 648 L758 640.5 L770 640.5 L775 653.5 L807 653.5 L807.5 640.5 L809 640.5 L815 653.5 L823 653.5 L824 649 L826 653.5 L844 653.5 L844.5 640.5 L847.5 653.5 L851.5 640.5 L855 653.5 L861 653.5 L862 648 L864 653.5 L914 653.5 L914.5 640.5 L916 640.5 L921 653.5 L1750 653.5" fill="none" stroke="#1e1eae" stroke-width="1.05" stroke-linejoin="round" /><path d="M55 861.5 L140 854 L230 843.5 L405 828 L580 811.5 L755 799 L930 788 L1105 780 L1280 775 L1455 772 L1630 771 L1750 770.5" fill="none" stroke="#ea8c2a" stroke-width="1.2" stroke-linejoin="round" /><path d="M3 975 L55 975 L110 975.5 L118 976.5 L215 975.5 L218 973 L222 970.5 L230 966.5 L240 963 L260 958 L280 954 L300 950 L325 942.5 L350 935 L375 928 L400 921.5 L400 921.5 L400 921.6 L402.02 921.6 L402.02 920.58 L402.52 918.62 L403.02 920.58 L403.46 920.58 L403.46 920.35 L404.85 920.35 L404.85 919.81 L407.59 919.81 L407.59 918.93 L408.09 915.71 L408.59 918.93 L410.32 918.93 L410.32 918.44 L410.82 915.01 L411.32 918.44 L411.6 918.44 L411.6 919.34 L412.1 916.91 L412.6 919.34 L414.16 919.34 L414.16 918.13 L414.66 915.95 L415.16 918.13 L417.45 918.13 L417.45 918.3 L420.14 918.3 L420.14 918.33 L421.23 918.33 L421.23 917.72 L423.86 917.72 L423.86 917.46 L426.44 917.46 L426.44 916.89 L428.02 916.89 L428.02 916.24 L430.73 916.24 L430.73 914.77 L431.23 912.63 L431.73 914.77 L433.83 914.77 L433.83 914.56 L436.72 914.56 L436.72 913.7 L437.22 911.75 L437.72 913.7 L440.2 913.7 L440.2 913.33 L440.7 910.82 L441.2 913.33 L443.3 913.33 L443.3 912.51 L443.8 915.38 L444.3 912.51 L445.86 912.51 L445.86 912.05 L448.4 912.05 L448.4 911.59 L448.9 908.63 L449.4 911.59 L450.08 911.59 L450.08 912.1 L451.57 912.1 L451.57 912.91 L452.07 911.05 L452.57 912.91 L453.26 912.91 L453.26 912.81 L456.43 912.81 L456.43 911.66 L456.93 909.2 L457.43 911.66 L458.65 911.66 L458.65 910.19 L459.15 906.79 L459.65 910.19 L462 910.19 L462 909.38 L463.19 909.38 L463.19 908.66 L466.47 908.66 L466.47 908.01 L469.4 908.01 L469.4 907.42 L472.46 907.42 L472.46 906.81 L472.96 904.34 L473.46 906.81 L474.86 906.81 L474.86 906.33 L475.36 903.53 L475.86 906.33 L478.22 906.33 L478.22 905.78 L480.02 905.78 L480.02 905.5 L483.29 905.5 L483.29 905.41 L486.64 905.41 L486.64 905.99 L488.59 905.99 L488.59 905.55 L489.09 908.51 L489.59 905.55 L491.31 905.55 L491.31 904.67 L492.32 904.67 L492.32 903.61 L492.82 901.84 L493.32 903.61 L493.85 903.61 L493.85 903.37 L495.83 903.37 L495.83 902.97 L497.6 902.97 L497.6 903.11 L500.18 903.11 L500.18 902.93 L500.68 905.83 L501.18 902.93 L501.98 902.93 L501.98 903.43 L502.48 901.65 L502.98 903.43 L503.02 903.43 L503.02 904.16 L505.43 904.16 L505.43 903.7 L506.82 903.7 L506.82 903.88 L507.32 901.65 L507.82 903.88 L510.04 903.88 L510.04 903.27 L511.7 903.27 L511.7 902.28 L512.2 904.82 L512.7 902.28 L514.35 902.28 L514.35 902.66 L516.53 902.66 L516.53 902.38 L519.73 902.38 L519.73 902.33 L520.23 904.42 L520.73 902.33 L521.87 902.33 L521.87 902.08 L522.37 900.25 L522.87 902.08 L524.07 902.08 L524.07 900.69 L524.57 897.29 L525.07 900.69 L526.14 900.69 L526.14 901.17 L526.64 899.12 L527.14 901.17 L527.16 901.17 L527.16 900.62 L529.82 900.62 L529.82 899.92 L533.01 899.92 L533.01 899.76 L533.51 902.65 L534.01 899.76 L534.02 899.76 L534.02 900.04 L535.87 900.04 L535.87 900.4 L537.29 900.4 L537.29 899.2 L540.65 899.2 L540.65 898.22 L542.06 898.22 L542.06 897.71 L544.39 897.71 L544.39 896.97 L545.52 896.97 L545.52 897.64 L547.91 897.64 L547.91 896.95 L548.41 893.65 L548.91 896.95 L551.27 896.95 L551.27 896.17 L551.77 893.15 L552.27 896.17 L552.35 896.17 L552.35 896.78 L553.63 896.78 L553.63 896.84 L556.21 896.84 L556.21 896.31 L558.94 896.31 L558.94 896.45 L561.41 896.45 L561.41 896.28 L561.91 898.95 L562.41 896.28 L564.87 896.28 L564.87 895.35 L565.37 897.51 L565.87 895.35 L566.39 895.35 L566.39 894.66 L568.73 894.66 L568.73 894.43 L569.23 892.65 L569.73 894.43 L571.47 894.43 L571.47 894.15 L571.97 892.07 L572.47 894.15 L573.47 894.15 L573.47 893.95 L573.97 892.13 L574.47 893.95 L575.54 893.95 L575.54 893.84 L578.12 893.84 L578.12 893.49 L579.52 893.49 L579.52 893.73 L582.31 893.73 L582.31 894.01 L582.81 896.8 L583.31 894.01 L584.07 894.01 L584.07 894.1 L586.21 894.1 L586.21 893.26 L588.43 893.26 L588.43 892.62 L588.93 890.84 L589.43 892.62 L591.12 892.62 L591.12 892.5 L594.57 892.5 L594.57 892.97 L596.17 892.97 L596.17 892.77 L599.36 892.77 L599.36 891.6 L601.78 891.6 L601.78 892.43 L603.53 892.43 L603.53 892.35 L605.53 892.35 L605.53 891.12 L606.03 887.79 L606.53 891.12 L606.73 891.12 L606.73 890.83 L607.78 890.83 L607.78 891.75 L610.37 891.75 L610.37 890.57 L610.87 887.97 L611.37 890.57 L613.75 890.57 L613.75 891.02 L615.8 891.02 L615.8 890.61 L616.8 890.61 L616.8 890.12 L618.44 890.12 L618.44 891.18 L620.59 891.18 L620.59 889.91 L621.09 887.4 L621.59 889.91 L622.36 889.91 L622.36 889.73 L622.86 892.2 L623.36 889.73 L624.44 889.73 L624.44 889.91 L625.73 889.91 L625.73 890.25 L626.23 887.27 L626.73 890.25 L628.67 890.25 L628.67 889.29 L629.17 886.64 L629.67 889.29 L631.75 889.29 L631.75 889.26 L632.25 886.01 L632.75 889.26 L633.72 889.26 L633.72 890.23 L634.22 886.94 L634.72 890.23 L636.45 890.23 L636.45 889.12 L638.58 889.12 L638.58 889.01 L640.36 889.01 L640.36 888.47 L641.73 888.47 L641.73 888.38 L642.23 886.61 L642.73 888.38 L642.84 888.38 L642.84 889.34 L643.98 889.34 L643.98 889.85 L644.48 886.56 L644.98 889.85 L645.06 889.85 L645.06 889.47 L646.36 889.47 L646.36 890.45 L646.86 892.86 L647.36 890.45 L649.7 890.45 L649.7 890.22 L650.2 888.4 L650.7 890.22 L652.73 890.22 L652.73 890.04 L655.83 890.04 L655.83 889.72 L658.54 889.72 L658.54 889.69 L659.04 886.91 L659.54 889.69 L660.26 889.69 L660.26 889.02 L660.76 887.11 L661.26 889.02 L662.1 889.02 L662.1 889.29 L664.77 889.29 L664.77 889.31 L667.24 889.31 L667.24 889.17 L669.22 889.17 L669.22 889.05 L669.72 885.88 L670.22 889.05 L672.33 889.05 L672.33 888.86 L672.83 890.74 L673.33 888.86 L675.18 888.86 L675.18 887.53 L675.68 885.04 L676.18 887.53 L677.85 887.53 L677.85 887.84 L678.35 884.95 L678.85 887.84 L679.16 887.84 L679.16 886.91 L680.74 886.91 L680.74 885.96 L681.24 882.74 L681.74 885.96 L683.3 885.96 L683.3 886.95 L686.62 886.95 L686.62 885.8 L687.97 885.8 L687.97 885.52 L688.47 883.27 L688.97 885.52 L690.01 885.52 L690.01 885.92 L690.51 883.67 L691.01 885.92 L691.1 885.92 L691.1 886.55 L691.6 884.5 L692.1 886.55 L693.97 886.55 L693.97 886.95 L696.99 886.95 L696.99 887.29 L699.02 887.29 L699.02 886.32 L701.56 886.32 L701.56 884.92 L702.06 887.32 L702.56 884.92 L702.65 884.92 L702.65 884.65 L705.49 884.65 L705.49 885.3 L707.53 885.3 L707.53 886.13 L709.44 886.13 L709.44 886.19 L709.94 882.91 L710.44 886.19 L711.46 886.19 L711.46 885.97 L713.68 885.97 L713.68 885.1 L715.77 885.1 L715.77 885.29 L716.27 882.01 L716.77 885.29 L718.56 885.29 L718.56 884.29 L719.06 882.29 L719.56 884.29 L719.85 884.29 L719.85 884.63 L722.73 884.63 L722.73 884.61 L726.2 884.61 L726.2 884.27 L727 884.27 L727 883.11 L728 883 L728 883 L730 876 L732 883 L735 879 L737 884 L740 880 L743 876 L745 881 L748 887 L752 895 L756 905 L758 925 L760 947.5 L765 958 L770 965 L780 970 L850 974 L960 978.5 L1750 980" fill="none" stroke="#6a2c90" stroke-width="1.2" stroke-linejoin="round" /><line x1="3" y1="160.5" x2="1718" y2="160.5" stroke="#3a3a3a" stroke-width="1" stroke-dasharray="5 5"/><line x1="3" y1="245.5" x2="1740" y2="245.5" stroke="#3a3a3a" stroke-width="1" stroke-dasharray="5 5"/><line x1="3" y1="348.5" x2="1718" y2="348.5" stroke="#3a3a3a" stroke-width="1" stroke-dasharray="5 5"/><line x1="3" y1="476.5" x2="1740" y2="476.5" stroke="#3a3a3a" stroke-width="1" stroke-dasharray="5 5"/><line x1="3" y1="582.5" x2="1718" y2="582.5" stroke="#3a3a3a" stroke-width="1" stroke-dasharray="5 5"/><line x1="3" y1="862.5" x2="1718" y2="862.5" stroke="#3a3a3a" stroke-width="1" stroke-dasharray="5 5"/><line x1="3" y1="975.5" x2="1718" y2="975.5" stroke="#3a3a3a" stroke-width="1" stroke-dasharray="5 5"/><rect x="3" y="172" width="1748" height="2" fill="#505050"/><rect x="3" y="289" width="1748" height="2" fill="#505050"/><rect x="3" y="406" width="1748" height="2" fill="#505050"/><rect x="3" y="523" width="1748" height="2" fill="#505050"/><rect x="3" y="640" width="1748" height="2" fill="#505050"/><rect x="3" y="757" width="1748" height="2" fill="#505050"/><rect x="3" y="874" width="1748" height="2" fill="#505050"/>
</g>
<rect x="0" y="29" width="3" height="966" fill="#d0d0d0"/><path d="M6.5 105 Q6.5 103 8.5 103 L30 103 L41.5 115 L30 127 L8.5 127 Q6.5 127 6.5 125 Z" fill="#e6e6e6" stroke="#555" stroke-width="1.2"/><text x="24.5" y="119.6" font-family="Liberation Sans" font-size="13" fill="#222" stroke="#222" stroke-width="0.25" text-anchor="middle" letter-spacing="2.6">C1</text><path d="M6.5 221 Q6.5 219 8.5 219 L30 219 L41.5 231 L30 243 L8.5 243 Q6.5 243 6.5 241 Z" fill="#e9fbfb" stroke="#2cc4cc" stroke-width="1.2"/><text x="24.5" y="235.6" font-family="Liberation Sans" font-size="13" fill="#222" stroke="#222" stroke-width="0.25" text-anchor="middle" letter-spacing="2.6">C2</text><path d="M6.5 338 Q6.5 336 8.5 336 L30 336 L41.5 348 L30 360 L8.5 360 Q6.5 360 6.5 358 Z" fill="#fdeef1" stroke="#e8527a" stroke-width="1.2"/><text x="24.5" y="352.6" font-family="Liberation Sans" font-size="13" fill="#e05070" stroke="#e05070" stroke-width="0.25" text-anchor="middle" letter-spacing="2.6">C3</text><path d="M6.5 455 Q6.5 453 8.5 453 L30 453 L41.5 465 L30 477 L8.5 477 Q6.5 477 6.5 475 Z" fill="#f3faea" stroke="#80c040" stroke-width="1.2"/><text x="24.5" y="469.6" font-family="Liberation Sans" font-size="13" fill="#222" stroke="#222" stroke-width="0.25" text-anchor="middle" letter-spacing="2.6">C4</text><path d="M6.5 572 Q6.5 570 8.5 570 L30 570 L41.5 582 L30 594 L8.5 594 Q6.5 594 6.5 592 Z" fill="#fff4e8" stroke="#f0a050" stroke-width="1.2"/><text x="24.5" y="586.6" font-family="Liberation Sans" font-size="13" fill="#222" stroke="#222" stroke-width="0.25" text-anchor="middle" letter-spacing="2.6">C5</text><path d="M6.5 689.5 Q6.5 687.5 8.5 687.5 L30 687.5 L41.5 699.5 L30 711.5 L8.5 711.5 Q6.5 711.5 6.5 709.5 Z" fill="#2626c6" stroke="#000" stroke-width="1.2"/><text x="24.5" y="704.1" font-family="Liberation Sans" font-size="13" fill="#fff" stroke="#fff" stroke-width="0.25" text-anchor="middle" letter-spacing="2.6">C6</text><path d="M6.5 852 Q6.5 850 8.5 850 L30 850 L41.5 862 L30 874 L8.5 874 Q6.5 874 6.5 872 Z" fill="#fff3e6" stroke="#ea9a50" stroke-width="1.2"/><text x="24.5" y="866.6" font-family="Liberation Sans" font-size="13" fill="#222" stroke="#222" stroke-width="0.25" text-anchor="middle" letter-spacing="2.6">M1</text><path d="M6.5 964 Q6.5 962 8.5 962 L30 962 L41.5 974 L30 986 L8.5 986 Q6.5 986 6.5 984 Z" fill="#f3ecf7" stroke="#9a60b8" stroke-width="1.2"/><text x="24.5" y="978.6" font-family="Liberation Sans" font-size="13" fill="#7a50a0" stroke="#7a50a0" stroke-width="0.25" text-anchor="middle" letter-spacing="2.6">M2</text><path d="M45 57 L65 57 L55.5 67 Z" fill="#f48c20"/><path d="M45.5 642.5 H64.5 V664 H59 L55.5 669 L52 664 H45.5 Z" fill="#000" stroke="#f48c20" stroke-width="2"/><path d="M49.5 647 H61 V650 H56.8 V660 H54 V650 H49.5 Z" fill="#f48c20"/><circle cx="1737" cy="71.5" r="5" fill="none" stroke="#a0a0a0" stroke-width="1.6"/><line x1="1733.5" y1="75" x2="1727" y2="81.5" stroke="#a0a0a0" stroke-width="2.4" stroke-linecap="round"/><path d="M1733 700 L1742 692 L1742 697 L1750 697 L1750 703 L1742 703 L1742 708 Z" fill="#2828c8"/><path d="M593 36.5 H586.5 V52.5 H593" fill="none" stroke="#e0e0e0" stroke-width="1.5"/><path d="M1161 36.5 H1167.5 V52.5 H1161" fill="none" stroke="#e0e0e0" stroke-width="1.5"/><rect x="587" y="44" width="580" height="2" fill="#b4b4b4"/><path d="M596 33 L611 33 L603.5 38.5 Z" fill="#f48c20"/><path d="M597 40.5 H609.5 V52.5 H606 L603.3 56 L600.5 52.5 H597 Z" fill="#000" stroke="#f48c20" stroke-width="1.6"/><path d="M600 43 H607 V45 H604.5 V50 H602.5 V45 H600 Z" fill="#f48c20"/>
</svg>
<div class="lbl" style="left:53px;top:102.3px;color:#111;text-shadow:none">U_loop,coil</div><div class="lbl" style="left:53px;top:218.8px;color:#22c4d2;text-shadow:0.8px 0.8px 0.5px rgba(0,0,0,.8)">U_Bt,coil</div><div class="lbl" style="left:53px;top:335.8px;color:#e8284e;text-shadow:0.8px 0.8px 0.5px rgba(0,0,0,.8)">U_Rog,coil</div><div class="lbl" style="left:53px;top:452.3px;color:#7cc232;text-shadow:0.6px 0.6px 0.5px rgba(0,0,0,.55)">U_Photod</div><div class="lbl" style="left:53px;top:569.8px;color:#fa922c;text-shadow:0.8px 0.8px 0.5px rgba(0,0,0,.8)">U_Diamagn</div><div class="lbl" style="left:53px;top:687.3px;color:#2222b0;text-shadow:0.5px 0.5px 0.4px rgba(0,0,0,.5)">Trigger</div><div class="lbl" style="left:53px;top:848.8px;color:#fa922c;text-shadow:0.8px 0.8px 0.5px rgba(0,0,0,.8)">B_t</div><div class="lbl" style="left:53px;top:960.8px;color:#7a34a4;text-shadow:0.8px 0.8px 0.5px rgba(0,0,0,.8)">I_p</div><div class="ax" style="top:84.5px;color:#111">30 V</div><div class="ax" style="top:107.5px;color:#111">20 V</div><div class="ax" style="top:130.5px;color:#111">10 V</div><div class="ax" style="top:153.5px;color:#111">0 V</div><div class="ax" style="top:180.5px;color:#20c0d0">1.25 V</div><div class="ax" style="top:203.5px;color:#20c0d0">750 mV</div><div class="ax" style="top:226.5px;color:#20c0d0">250 mV</div><div class="ax" style="top:249.5px;color:#20c0d0">-250 mV</div><div class="ax" style="top:272.5px;color:#20c0d0">-750 mV</div><div class="ax" style="top:295.5px;color:#e42a52">1.80 V</div><div class="ax" style="top:318.5px;color:#e42a52">900 mV</div><div class="ax" style="top:341.5px;color:#e42a52">0 V</div><div class="ax" style="top:364.5px;color:#e42a52">-900 mV</div><div class="ax" style="top:387.5px;color:#e42a52">-1.80 V</div><div class="ax" style="top:412.5px;color:#70b82a">1 V</div><div class="ax" style="top:435.5px;color:#70b82a">600 mV</div><div class="ax" style="top:458.5px;color:#70b82a">200 mV</div><div class="ax" style="top:481.5px;color:#70b82a">-200 mV</div><div class="ax" style="top:504.5px;color:#70b82a">-600 mV</div><div class="ax" style="top:529.5px;color:#f8902c">4 V</div><div class="ax" style="top:552.5px;color:#f8902c">2 V</div><div class="ax" style="top:575.5px;color:#f8902c">0 V</div><div class="ax" style="top:598.5px;color:#f8902c">-2 V</div><div class="ax" style="top:621.5px;color:#f8902c">-4 V</div><div class="ax" style="top:646.5px;color:#2424a4">6 V</div><div class="ax" style="top:669.5px;color:#2424a4">4.50 V</div><div class="ax" style="top:692.5px;color:#2424a4">3 V</div><div class="ax" style="top:715.5px;color:#2424a4">1.50 V</div><div class="ax" style="top:738.5px;color:#2424a4">0 V</div><div class="ax" style="top:763.5px;color:#f08a2c">374.117 mT</div><div class="ax" style="top:786.5px;color:#f08a2c">280.588 mT</div><div class="ax" style="top:809.5px;color:#f08a2c">187.058 mT</div><div class="ax" style="top:832.5px;color:#f08a2c">93.529 mT</div><div class="ax" style="top:854.5px;color:#f08a2c">0 T</div><div class="ax" style="top:875.5px;color:#5a2a80">6.405237 kA</div><div class="ax" style="top:898.5px;color:#5a2a80">4.803928 kA</div><div class="ax" style="top:921.5px;color:#5a2a80">3.202619 kA</div><div class="ax" style="top:944.5px;color:#5a2a80">1.601309 kA</div><div class="ax" style="top:967.5px;color:#5a2a80">0 A</div><div class="tx" style="left:44.83px;top:741px;width:21.34px;text-align:center;height:16px;line-height:12px">0 s</div><div class="tx" style="left:214.29px;top:741px;width:32.17px;text-align:center;background:#fff;height:16px;line-height:12px">3 ms</div><div class="tx" style="left:389.16px;top:741px;width:32.17px;text-align:center;background:#fff;height:16px;line-height:12px">6 ms</div><div class="tx" style="left:564.04px;top:741px;width:32.17px;text-align:center;background:#fff;height:16px;line-height:12px">9 ms</div><div class="tx" style="left:735.3px;top:741px;width:39.41px;text-align:center;background:#fff;height:16px;line-height:12px">12 ms</div><div class="tx" style="left:910.17px;top:741px;width:39.41px;text-align:center;background:#fff;height:16px;line-height:12px">15 ms</div><div class="tx" style="left:1085.05px;top:741px;width:39.41px;text-align:center;background:#fff;height:16px;line-height:12px">18 ms</div><div class="tx" style="left:1259.92px;top:741px;width:39.41px;text-align:center;background:#fff;height:16px;line-height:12px">21 ms</div><div class="tx" style="left:1434.8px;top:741px;width:39.41px;text-align:center;background:#fff;height:16px;line-height:12px">24 ms</div><div class="tx" style="left:1609.67px;top:741px;width:39.41px;text-align:center;background:#fff;height:16px;line-height:12px">27 ms</div><svg class="plot" width="1920" height="1080" style="pointer-events:none"><path d="M1710 63.5 L1742 63.5 Q1746 63.5 1746 67.5 L1746 96 Q1746 99 1743.5 96.5 Z" fill="#4c4c4c" stroke="#111" stroke-width="1.5" stroke-linejoin="round"/><circle cx="1737.5" cy="71.5" r="4.5" fill="none" stroke="#a8a8a8" stroke-width="1.6"/><line x1="1734.2" y1="74.8" x2="1728.5" y2="80.5" stroke="#a8a8a8" stroke-width="2.4" stroke-linecap="round"/><path d="M1730 699.5 L1741.5 690 L1741.5 698 L1751 698 L1751 701.2 L1741.5 701.2 L1741.5 709 Z" fill="#2424c0"/></svg>
<div id="side" class="abs">
<div class="abs" style="left:0;top:0;width:150px;text-align:center;font-size:15px;font-weight:bold;color:#e8e8e8;line-height:18px;top:-0.5px">Add New...</div><div class="sbtn" style="left:7px;top:24px;line-height:32.5px">Cursors</div><div class="sbtn" style="left:79px;top:24px;line-height:32.5px">Callout</div><div class="sbtn" style="left:7px;top:70px;line-height:32.5px">Measure</div><div class="sbtn" style="left:79px;top:70px;line-height:32.5px">Search</div><div class="sbtn" style="left:7px;top:116px;line-height:15.5px;padding-top:1px">Results<br>Table</div><div class="sbtn" style="left:79px;top:116px;line-height:32.5px">Plot</div><div class="abs" style="left:3px;top:159px;width:143px;height:1px;background:#5e5650"></div><div class="sbtn" style="left:7px;top:166px"><svg width="61" height="35" style="position:absolute;left:0;top:0"><rect x="18.5" y="7" width="23" height="18" fill="none" stroke="#a8a8a8" stroke-width="2.2" stroke-dasharray="3 2.2"/><circle cx="31" cy="14.5" r="5" fill="none" stroke="#c8c8c8" stroke-width="2"/><line x1="27.5" y1="18" x2="22.5" y2="23" stroke="#c8c8c8" stroke-width="2.6" stroke-linecap="round"/><path d="M36 20 L45 26 L41.5 26.8 L44 31 L42 32 L39.5 27.8 L37 30 Z" fill="#c8c8c8"/></svg></div><div class="sbtn" style="left:79px;top:166px;line-height:32.5px">More...</div><div class="abs" style="left:3px;top:211px;width:143px;height:1px;background:#5e5650"></div>
</div>
<div class="chb" style="left:3px;top:984px;height:94px"><div class="h" style="background:#1c1c1c;color:#e8e04a;height:19px;line-height:19px">Ch 1</div><div style="position:absolute;left:0;top:24px;width:90px;height:17px;background:#f00;color:#fff;line-height:17px;padding-left:17px;font-size:16px"><svg width="18" height="17" style="position:absolute;left:0px;top:0px"><path d="M9 1.2 L17 16.3 L1.2 16.3 Z" fill="#f2ea00" stroke="#3a3a5a" stroke-width="1.1" stroke-linejoin="round"/><rect x="8.2" y="5.5" width="1.6" height="8" fill="#9a9440"/></svg>Clipping</div><div class="l" style="top:41.9px;font-weight:normal;line-height:17px">5 V/div</div><div class="l" style="top:61.5px;font-weight:normal;line-height:17px">1 M&Omega;</div><div class="l" style="top:79.9px;font-weight:normal;line-height:17px">200 kHz</div><span style="position:absolute;right:4px;bottom:6px;font-size:10px;line-height:10px">B<sub style="font-size:9px;vertical-align:-3px">w</sub></span></div><div class="chb" style="left:98px;top:984px;height:94px"><div class="h" style="background:#1f4242;color:#30c4cc;height:19px;line-height:19px">Ch 2</div><div style="position:absolute;left:0;top:24px;width:90px;height:17px;background:#f00;color:#fff;line-height:17px;padding-left:17px;font-size:16px"><svg width="18" height="17" style="position:absolute;left:0px;top:0px"><path d="M9 1.2 L17 16.3 L1.2 16.3 Z" fill="#f2ea00" stroke="#3a3a5a" stroke-width="1.1" stroke-linejoin="round"/><rect x="8.2" y="5.5" width="1.6" height="8" fill="#9a9440"/></svg>Clipping</div><div class="l" style="top:41.9px;font-weight:normal;line-height:17px">250 mV/div</div><div class="l" style="top:61.5px;font-weight:normal;line-height:17px">1 M&Omega;</div><div class="l" style="top:79.9px;font-weight:normal;line-height:17px">200 kHz</div><span style="position:absolute;right:4px;bottom:6px;font-size:10px;line-height:10px">B<sub style="font-size:9px;vertical-align:-3px">w</sub></span></div><div class="chb" style="left:193px;top:984px;height:94px"><div class="h" style="background:#482529;color:#f2e6e6;height:19px;line-height:19px">Ch 3</div><div style="position:absolute;left:0;top:24px;width:90px;height:17px;background:#f00;color:#fff;line-height:17px;padding-left:17px;font-size:16px"><svg width="18" height="17" style="position:absolute;left:0px;top:0px"><path d="M9 1.2 L17 16.3 L1.2 16.3 Z" fill="#f2ea00" stroke="#3a3a5a" stroke-width="1.1" stroke-linejoin="round"/><rect x="8.2" y="5.5" width="1.6" height="8" fill="#9a9440"/></svg>Clipping</div><div class="l" style="top:41.9px;font-weight:normal;line-height:17px">450 mV/div</div><div class="l" style="top:61.5px;font-weight:normal;line-height:17px">1 M&Omega;</div><div class="l" style="top:79.9px;font-weight:normal;line-height:17px">200 kHz</div><span style="position:absolute;right:4px;bottom:6px;font-size:10px;line-height:10px">B<sub style="font-size:9px;vertical-align:-3px">w</sub></span></div><div class="chb" style="left:288px;top:999px;height:79px"><div class="h" style="background:#2e3b22;color:#8ccc3c;height:18.5px;line-height:19px">Ch 4</div><div style="position:absolute;left:0;top:18.5px;width:90px;height:2.5px;background:#a8a8a8"></div><div class="l" style="top:23px;font-weight:normal;line-height:17px">200 mV/div</div><div class="l" style="top:43.3px;font-weight:normal;line-height:17px">1 M&Omega;</div><div class="l" style="top:61.25px;font-weight:normal;line-height:17px">200 kHz</div><span style="position:absolute;right:4px;bottom:6px;font-size:10px;line-height:10px">B<sub style="font-size:9px;vertical-align:-3px">w</sub></span></div><div class="chb" style="left:383px;top:999px;height:79px"><div class="h" style="background:#4b3421;color:#f09232;height:18.5px;line-height:19px">Ch 5</div><div style="position:absolute;left:0;top:18.5px;width:90px;height:2.5px;background:#a8a8a8"></div><div class="l" style="top:23px;font-weight:normal;line-height:17px">1 V/div</div><div class="l" style="top:43.3px;font-weight:normal;line-height:17px">1 M&Omega;</div><div class="l" style="top:61.25px;font-weight:normal;line-height:17px">200 kHz</div><span style="position:absolute;right:4px;bottom:6px;font-size:10px;line-height:10px">B<sub style="font-size:9px;vertical-align:-3px">w</sub></span></div><div class="chb" style="left:478px;top:984px;height:94px"><div class="h" style="background:#2a2acc;color:#ffffff;height:19px;line-height:19px">Ch 6</div><div style="position:absolute;left:0;top:24px;width:90px;height:17px;background:#f00;color:#fff;line-height:17px;padding-left:17px;font-size:16px"><svg width="18" height="17" style="position:absolute;left:0px;top:0px"><path d="M9 1.2 L17 16.3 L1.2 16.3 Z" fill="#f2ea00" stroke="#3a3a5a" stroke-width="1.1" stroke-linejoin="round"/><rect x="8.2" y="5.5" width="1.6" height="8" fill="#9a9440"/></svg>Clipping</div><div class="l" style="top:41.9px;font-weight:normal;line-height:17px">750 mV/div</div><div class="l" style="top:61.5px;font-weight:normal;line-height:17px">1 M&Omega;</div><div class="l" style="top:79.9px;font-weight:normal;line-height:17px">200 kHz</div><span style="position:absolute;right:4px;bottom:6px;font-size:10px;line-height:10px">B<sub style="font-size:9px;vertical-align:-3px">w</sub></span></div><div class="chb" style="left:573px;top:999px;height:79px"><div class="h" style="background:#4a3220;color:#f09232;height:18.5px;line-height:19px">Math 1</div><div style="position:absolute;left:0;top:18.5px;width:90px;height:2.5px;background:#a8a8a8"></div><div class="l" style="top:23px;font-weight:bold;line-height:17px">46.7646 ...</div><div class="l" style="top:43.3px;font-weight:normal;line-height:17px">Intg(ch2)...</div></div><div class="chb" style="left:668px;top:999px;height:79px"><div class="h" style="background:#2d2135;color:#f4f4f4;height:18.5px;line-height:19px">Math 2</div><div style="position:absolute;left:0;top:18.5px;width:90px;height:2.5px;background:#a8a8a8"></div><div class="l" style="top:23px;font-weight:bold;line-height:17px">800.6546...</div><div class="l" style="top:43.3px;font-weight:normal;line-height:17px">-intg(ch3...</div></div><div class="abs" style="left:1117px;top:999px;width:1px;height:78px;background:#6b6058"></div><div class="abs" style="left:1268px;top:999px;width:1px;height:78px;background:#6b6058"></div><div class="abs" style="left:1811px;top:999px;width:1px;height:78px;background:#6b6058"></div><div class="anb" style="left:1128px"><i style="background:#c42626"></i><div>Add<br>New<br>Math</div></div><div class="anb" style="left:1173px"><i style="background:#c8c8dc"></i><div>Add<br>New<br>Ref</div></div><div class="anb" style="left:1218px"><i style="background:#c040f0"></i><div>Add<br>New<br>Bus</div></div><div class="panel" style="left:1280px;width:198px"><div class="h">Horizontal</div><div class="l" style="left:5.5px;top:20.9px;line-height:17px;">3 ms/div</div><div class="l" style="left:5.5px;top:39.8px;line-height:17px;">SR: 1 MS/s</div><div class="l" style="left:5.5px;top:58.7px;line-height:17px;">RL: 30 kpts</div><div class="l" style="left:112px;top:20.9px;line-height:17px;">30 ms</div><div class="l" style="left:112px;top:39.8px;line-height:17px;">1 &micro;s/pt</div><div class="l" style="left:126px;top:58.7px;line-height:17px;">3%</div><svg width="12" height="16" style="position:absolute;left:111px;top:60px"><path d="M1 1 H10 V10 H7.5 L5.5 13 L3.5 10 H1 Z" fill="#000" stroke="#f48c20" stroke-width="1.5"/><path d="M3 3 H8 V4.6 H6.3 V8.5 H4.7 V4.6 H3 Z" fill="#fff"/></svg></div><div class="panel" style="left:1485px;width:158px"><div class="h">Trigger</div><div class="abs" style="left:6px;top:23px;width:29px;height:16px;background:#2a2acc;border:1px solid #111;border-radius:5px;color:#fff;text-align:center;line-height:14px;font-size:15px">6</div><svg width="18" height="14" style="position:absolute;left:45px;top:25px"><path d="M1 12 H4 L14 2 H17" fill="none" stroke="#3a3a8a" stroke-width="1.3"/></svg><div class="l" style="left:72px;top:20.7px;line-height:17px;">3 V</div></div><div class="panel" style="left:1650px;width:148px"><div class="h">Acquisition</div><div class="l" style="left:5.5px;top:21px;line-height:17px;">Manual,</div><div class="l" style="left:87px;top:21px;line-height:17px;">Analyze</div><div class="l" style="left:5.5px;top:40px;line-height:17px;">High Res: 16 bits</div><div class="l" style="left:5.5px;top:58.95px;line-height:17px;">Single: 1 /1</div></div><div class="abs" style="left:1822px;top:998px;width:90px;height:36px;background:#ff1c24;border:1px solid #3a1010;border-radius:7px;color:#fff;font-weight:bold;font-size:12.7px;text-align:center;line-height:33px">Stopped</div><div class="abs" style="left:1822px;top:1041px;width:90px;height:37px;background:#c8c8c8;border-radius:6px;color:#111;font-size:14.7px;text-align:center;line-height:17px;padding-top:1px;white-space:nowrap">09 Dec 2024<br>5:42:45 PM</div><div class="abs" style="left:1759.8px;top:500.8px;width:4.6px;height:4.6px;border-radius:50%;background:#c4c4c4"></div><div class="abs" style="left:1759.8px;top:509.5px;width:4.6px;height:4.6px;border-radius:50%;background:#c4c4c4"></div><div class="abs" style="left:1759.8px;top:518.2px;width:4.6px;height:4.6px;border-radius:50%;background:#c4c4c4"></div>
</body></html>
